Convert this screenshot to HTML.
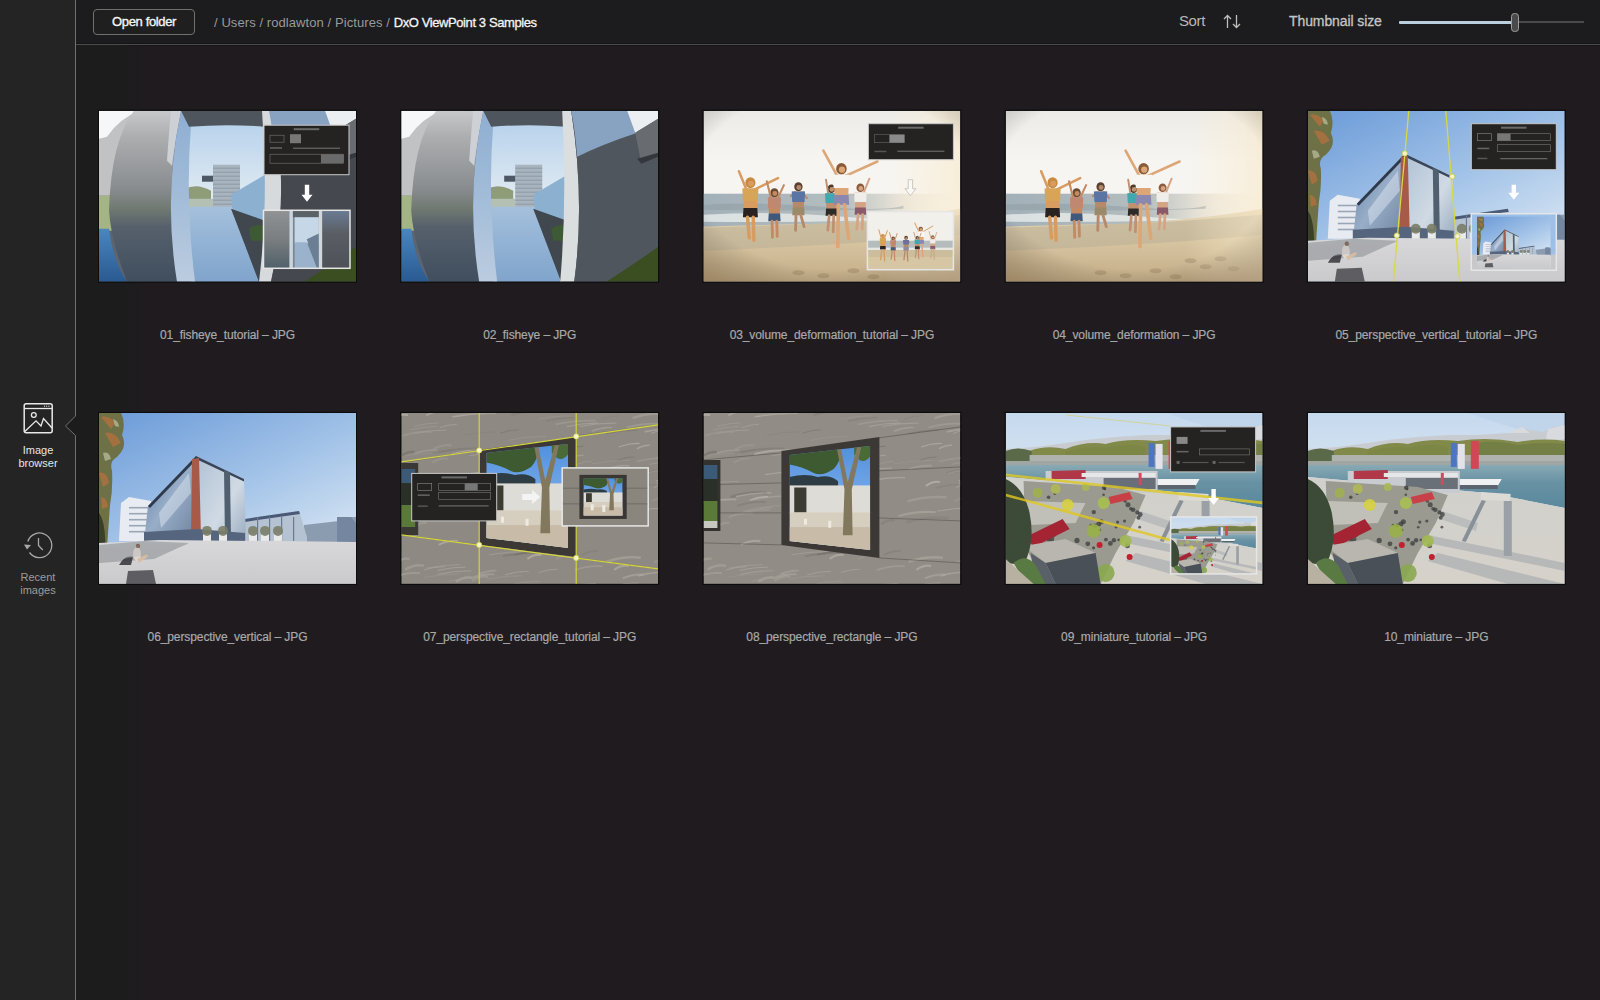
<!DOCTYPE html>
<html><head><meta charset="utf-8">
<style>
*{margin:0;padding:0;box-sizing:border-box}
html,body{width:1600px;height:1000px;overflow:hidden;background:#1f1b1f;font-family:"Liberation Sans",sans-serif}
#top{position:absolute;left:76px;top:0;width:1524px;height:44px;background:#1c1b1d}
#lstrip{position:absolute;left:76px;top:45px;width:70px;height:955px;background:linear-gradient(90deg,#1c1c1c 0,#1c1c1c 60%,rgba(31,27,31,0) 100%)}
#hline{position:absolute;left:76px;top:43px;width:1524px;height:3px;background:linear-gradient(#161516 0,#161516 33%,#4c4b4c 33%,#4c4b4c 67%,#161516 67%)}
.btn{position:absolute;left:93px;top:9px;width:102px;height:26px;border:1.5px solid #707070;border-radius:4px;background:#1f1f1f}
.t{position:absolute;white-space:nowrap;line-height:1}
.lab{position:absolute;width:302px;text-align:center;font-size:12px;line-height:14px;color:#a9a9a9;white-space:nowrap;letter-spacing:-0.1px;-webkit-text-stroke:0.2px #a9a9a9}
#g{position:absolute;left:0;top:0}
</style></head><body>
<div id="top"></div>
<div id="hline"></div>
<div id="lstrip"></div>
<div class="btn"></div>
<div class="t" style="left:112px;top:15px;font-size:13px;color:#f4f4f4;letter-spacing:-0.35px;-webkit-text-stroke:0.35px #f4f4f4">Open folder</div>
<div class="t" style="left:214px;top:16px;font-size:13px;color:#9a9a9a;letter-spacing:0.08px">/ Users / rodlawton / Pictures / <span style="color:#f4f4f4;letter-spacing:-0.4px;-webkit-text-stroke:0.3px #f4f4f4">DxO ViewPoint 3 Samples</span></div>
<div class="t" style="left:1179px;top:13px;font-size:15px;letter-spacing:-0.4px;color:#b8b8b8">Sort</div>
<svg style="position:absolute;left:1222px;top:13px" width="20" height="17" viewBox="0 0 20 17">
<path d="M5.5 2.5V15 M2 6 L5.5 2.5 L9 6" stroke="#bdbdbd" stroke-width="1.3" fill="none"/>
<path d="M14.5 2V14.5 M11 11 L14.5 14.5 L18 11" stroke="#bdbdbd" stroke-width="1.3" fill="none"/>
</svg>
<div class="t" style="left:1289px;top:14px;font-size:14px;color:#c4c4c4;letter-spacing:-0.1px;-webkit-text-stroke:0.3px #c4c4c4">Thumbnail size</div>
<div style="position:absolute;left:1399px;top:21px;width:114px;height:3px;background:#b9cfe0;border-radius:1px"></div>
<div style="position:absolute;left:1517px;top:21px;width:67px;height:2px;background:#4a4a4a"></div>
<div style="position:absolute;left:1511px;top:12.5px;width:8px;height:19.5px;background:#4a4a4a;border:1.5px solid #a0a0a0;border-radius:3.5px"></div>
<svg style="position:absolute;left:0;top:0" width="80" height="1000" viewBox="0 0 80 1000">
<rect x="60" y="400" width="20" height="50" fill="#1c1c1c"/>
<path d="M0 0 H75.5 V416 L65.5 426 L75.5 435.5 V1000 H0Z" fill="#242424"/>
<path d="M75.5 0 V416 L65.5 426 L75.5 435.5 V1000" stroke="#707070" stroke-width="1" fill="none"/>
<rect x="24.2" y="403.7" width="28" height="29" rx="2" stroke="#e8e8e8" stroke-width="1.5" fill="none"/>
<path d="M24.2 408.5 H52.2" stroke="#e8e8e8" stroke-width="1.3"/>
<circle cx="44.5" cy="406.2" r="0.6" fill="#e8e8e8"/><circle cx="46.7" cy="406.2" r="0.6" fill="#e8e8e8"/><circle cx="48.9" cy="406.2" r="0.6" fill="#e8e8e8"/>
<circle cx="33.8" cy="415" r="2.4" stroke="#e8e8e8" stroke-width="1.3" fill="none"/>
<path d="M24.8 431.5 L36 420.8 L41 426 L43.5 418.5 L52 428" stroke="#e8e8e8" stroke-width="1.3" fill="none"/>
<path d="M29.5 552.5 A12.3 12.3 0 1 0 27.8 541.5" stroke="#a8a8a8" stroke-width="1.3" fill="none"/>
<path d="M24 544.5 L31 545 L27 549.5Z" fill="#a8a8a8"/>
<path d="M38.5 538 V545.5 L42.8 550" stroke="#a8a8a8" stroke-width="1.3" fill="none"/>
</svg>
<div class="t" style="left:0;width:76px;text-align:center;top:444px;font-size:11px;line-height:13px;color:#e6e6e6">Image<br>browser</div>
<div class="t" style="left:0;width:76px;text-align:center;top:571px;font-size:11px;line-height:13px;color:#9c9c9c">Recent<br>images</div>
<svg id="g" width="1600" height="1000" viewBox="0 0 1600 1000"><defs><clipPath id="tc"><rect width="257" height="171"/></clipPath><linearGradient id="fwL" x1="0" y1="0" x2="0" y2="1"><stop offset="0" stop-color="#c4c6c8"/><stop offset="0.3" stop-color="#94979b"/><stop offset="0.6" stop-color="#687078"/><stop offset="1" stop-color="#4a5c70"/></linearGradient><linearGradient id="fpil" x1="0" y1="0" x2="1" y2="0"><stop offset="0" stop-color="#eef2f6"/><stop offset="1" stop-color="#d2dee8"/></linearGradient><linearGradient id="fsky" x1="0" y1="0" x2="0" y2="1"><stop offset="0" stop-color="#b8d2ec"/><stop offset="1" stop-color="#e6eef2"/></linearGradient><linearGradient id="fwalk" x1="0" y1="0" x2="0" y2="1"><stop offset="0" stop-color="#a4c0dc"/><stop offset="1" stop-color="#80a4cc"/></linearGradient><linearGradient id="fwR" x1="0" y1="0" x2="0" y2="1"><stop offset="0" stop-color="#70767e"/><stop offset="0.3" stop-color="#565b62"/><stop offset="1" stop-color="#4a4e54"/></linearGradient><linearGradient id="fwL2" x1="0" y1="0" x2="0" y2="1"><stop offset="0" stop-color="#c8c8ca"/><stop offset="0.15" stop-color="#acaeb0"/><stop offset="0.45" stop-color="#8a8d90"/><stop offset="0.58" stop-color="#6e7870"/><stop offset="0.68" stop-color="#56606c"/><stop offset="1" stop-color="#404e5e"/></linearGradient><linearGradient id="fpilB" x1="0" y1="0" x2="0" y2="1"><stop offset="0" stop-color="#8eaed2"/><stop offset="0.5" stop-color="#a2bcd8"/><stop offset="1" stop-color="#bccce0"/></linearGradient><linearGradient id="fwater" x1="0" y1="0" x2="0" y2="1"><stop offset="0" stop-color="#4a86c0"/><stop offset="1" stop-color="#2a5a90"/></linearGradient><linearGradient id="fiL" x1="0" y1="0" x2="0" y2="1"><stop offset="0" stop-color="#909294"/><stop offset="0.5" stop-color="#7a7e80"/><stop offset="1" stop-color="#50606a"/></linearGradient><linearGradient id="fiR" x1="0" y1="0" x2="0" y2="1"><stop offset="0" stop-color="#6a7c94"/><stop offset="0.4" stop-color="#5a5e64"/><stop offset="1" stop-color="#4e5258"/></linearGradient><linearGradient id="bsky" x1="0" y1="0" x2="0" y2="1"><stop offset="0" stop-color="#ecebe8"/><stop offset="0.3" stop-color="#f6f5f2"/><stop offset="1" stop-color="#f8f5ee"/></linearGradient><linearGradient id="bsea" x1="0" y1="0" x2="1" y2="0"><stop offset="0" stop-color="#a2b0b8"/><stop offset="0.55" stop-color="#b4bec0"/><stop offset="0.8" stop-color="#e4dccc" stop-opacity="0.6"/><stop offset="1" stop-color="#f0e4cc" stop-opacity="0"/></linearGradient><linearGradient id="bsand" x1="0" y1="0" x2="0" y2="1"><stop offset="0" stop-color="#e4d6b8"/><stop offset="0.4" stop-color="#d8c6a2"/><stop offset="1" stop-color="#c4ad88"/></linearGradient><radialGradient id="bvig" cx="0.5" cy="0.4" r="0.75"><stop offset="0" stop-color="#000" stop-opacity="0"/><stop offset="0.7" stop-color="#000" stop-opacity="0"/><stop offset="1" stop-color="#4a3418" stop-opacity="0.3"/></radialGradient><linearGradient id="bglow" x1="0" y1="0" x2="1" y2="0"><stop offset="0" stop-color="#fff4dc" stop-opacity="0"/><stop offset="0.7" stop-color="#fff0d0" stop-opacity="0"/><stop offset="1" stop-color="#f8e8c8" stop-opacity="0.6"/></linearGradient><linearGradient id="psky" x1="0" y1="0" x2="0.7" y2="1"><stop offset="0" stop-color="#6a9ad8"/><stop offset="0.55" stop-color="#a4c4e8"/><stop offset="1" stop-color="#dce8f4"/></linearGradient><linearGradient id="pglassL" x1="0" y1="0" x2="1" y2="1"><stop offset="0" stop-color="#5e7ca4"/><stop offset="0.5" stop-color="#98aec8"/><stop offset="1" stop-color="#6a809c"/></linearGradient><linearGradient id="pglassR" x1="0" y1="0" x2="1" y2="1"><stop offset="0" stop-color="#b0c2d6"/><stop offset="0.6" stop-color="#d0dae4"/><stop offset="1" stop-color="#9aacc0"/></linearGradient><linearGradient id="pplaza" x1="0" y1="0" x2="0" y2="1"><stop offset="0" stop-color="#d8d8da"/><stop offset="1" stop-color="#cacacc"/></linearGradient><linearGradient id="wsky" x1="0" y1="0" x2="0" y2="1"><stop offset="0" stop-color="#5090e0"/><stop offset="1" stop-color="#a0c4ee"/></linearGradient><linearGradient id="rsky" x1="0" y1="0" x2="0" y2="1"><stop offset="0" stop-color="#c6daee"/><stop offset="0.6" stop-color="#dfe8f0"/><stop offset="1" stop-color="#e8eef2"/></linearGradient><linearGradient id="rriver" x1="0" y1="0" x2="0" y2="1"><stop offset="0" stop-color="#88aab4"/><stop offset="0.4" stop-color="#6892a4"/><stop offset="1" stop-color="#5a889c"/></linearGradient><linearGradient id="rquay" x1="0" y1="0" x2="0" y2="1"><stop offset="0" stop-color="#d0d0cc"/><stop offset="1" stop-color="#d6d2ca"/></linearGradient></defs><g transform="translate(99,110.7)"><g clip-path="url(#tc)"><rect width="257" height="171" fill="#5c6470"/><path d="M0 0 H60 V10 Q30 20 22 85 H0Z" fill="#c0c2c4"/><path d="M0 0 H40 Q20 8 8 26 L0 28Z" fill="#f6f7f8"/><path d="M0 85 H14 V120 H0Z" fill="#a4b484"/><path d="M0 118 H10 Q14 150 28 171 H0Z" fill="url(#fwater)"/><path d="M35 0 H82 Q64 85 78 171 H28 Q12 130 10 100 Q12 30 35 0Z" fill="url(#fwL2)"/><rect x="86" y="12" width="80" height="86" fill="url(#fsky)"/><path d="M86 78 Q98 72 112 80 V98 H86Z" fill="#8e9c78"/><path d="M86 88 H114 V98 H86Z" fill="#b4c0b4"/><rect x="114" y="54" width="27" height="43" fill="#a8b4be"/><rect x="114" y="57" width="27" height="1" fill="#8e9aa6"/><rect x="114" y="61" width="27" height="1" fill="#8e9aa6"/><rect x="114" y="65" width="27" height="1" fill="#8e9aa6"/><rect x="114" y="69" width="27" height="1" fill="#8e9aa6"/><rect x="114" y="73" width="27" height="1" fill="#8e9aa6"/><rect x="114" y="77" width="27" height="1" fill="#8e9aa6"/><rect x="114" y="81" width="27" height="1" fill="#8e9aa6"/><rect x="114" y="85" width="27" height="1" fill="#8e9aa6"/><rect x="114" y="89" width="27" height="1" fill="#8e9aa6"/><rect x="114" y="93" width="27" height="1" fill="#8e9aa6"/><rect x="103" y="65" width="11" height="6" fill="#4e5864"/><path d="M132 84 L166 64 V112 L134 104Z" fill="#8cb0d0"/><path d="M86 96 H132 L160 171 H92Z" fill="url(#fwalk)"/><path d="M132 98 L166 110 V171 H160Z" fill="#40474e"/><path d="M150 118 Q158 112 166 116 V130 H152Z" fill="#3e5a34"/><path d="M72 0 H82 Q76 30 73 55 L68 50 Q70 20 72 0Z" fill="#cdd1d5"/><path d="M82 0 Q64 85 78 171 H96 Q86 90 92 14 L90 0Z" fill="url(#fpilB)"/><path d="M82 0 H168 L165 16 Q128 13 90 16Z" fill="#4e555c"/><path d="M163 0 Q170 90 160 171 H172 Q190 90 176 0Z" fill="#d6dadc"/><path d="M176 0 Q190 90 172 171 H257 V0Z" fill="#45494f"/><path d="M170 0 H230 L236 22 Q200 34 176 46 Q174 20 170 0Z" fill="#88a2c2"/><path d="M226 0 H257 V8 L234 22Z" fill="#eceff2"/><path d="M234 22 L257 8 V45 L240 52Z" fill="#686c70"/><path d="M236 48 L257 42 V46 L240 53Z" fill="#34383c"/><path d="M205 171 Q235 152 257 136 V171Z" fill="#3a4e22"/><rect x="165" y="14.5" width="85" height="49.5" fill="#252322" stroke="#c8c8c8" stroke-width="1"/><rect x="194.75" y="17.5" width="25.5" height="2" fill="#6a6a6a"/><rect x="171" y="24.5" width="14" height="7" fill="none" stroke="#777" stroke-width="0.6"/><rect x="191" y="23.5" width="11" height="9" fill="#777"/><rect x="171" y="36.5" width="12" height="1.5" fill="#666"/><rect x="194" y="37.0" width="47" height="1" fill="#777"/><rect x="171" y="43.5" width="73" height="9" fill="none" stroke="#777" stroke-width="0.6"/><rect x="221.95" y="43.5" width="22.950000000000003" height="9" fill="#6a6a6a"/><path d="M205.8 74 H210.2 V84 H213.5 L208 91 L202.5 84 H205.8Z" fill="#ffffff" stroke="none" stroke-width="0.7"/><svg x="164.5" y="99.6" width="86.5" height="58" viewBox="0 0 86.5 58" preserveAspectRatio="none" overflow="hidden"><rect width="86.5" height="58" fill="#7c8690"/><rect x="0" y="0" width="25.95" height="58" fill="url(#fiL)"/><rect x="25.95" y="0" width="3.46" height="58" fill="#c8d4de"/><rect x="29.410000000000004" y="0" width="25.95" height="6.96" fill="#5a6268"/><rect x="31.14" y="6.96" width="24.220000000000002" height="26.1" fill="#c6d8e8"/><path d="M31.14 31.900000000000002 H43.25 L53.63 58 H31.14Z" fill="#9ab2cc"/><path d="M43.25 29.0 L55.36 23.200000000000003 V58 H53.63Z" fill="#6a7e94"/><rect x="55.36" y="0" width="3.46" height="58" fill="#d0d6dc"/><rect x="58.82000000000001" y="0" width="27.68" height="58" fill="url(#fiR)"/></svg><rect x="164.5" y="99.6" width="86.5" height="58" fill="none" stroke="#e6e6e6" stroke-width="1.5"/></g><rect x="-0.5" y="-0.5" width="258" height="172" fill="none" stroke="#0c0c0c" stroke-width="1"/></g><g transform="translate(401.2,110.7)"><g clip-path="url(#tc)"><rect width="257" height="171" fill="#5c6470"/><path d="M0 0 H60 V10 Q30 20 22 85 H0Z" fill="#c0c2c4"/><path d="M0 0 H40 Q20 8 8 26 L0 28Z" fill="#f6f7f8"/><path d="M0 85 H14 V120 H0Z" fill="#a4b484"/><path d="M0 118 H10 Q14 150 28 171 H0Z" fill="url(#fwater)"/><path d="M35 0 H82 Q64 85 78 171 H28 Q12 130 10 100 Q12 30 35 0Z" fill="url(#fwL2)"/><rect x="86" y="12" width="80" height="86" fill="url(#fsky)"/><path d="M86 78 Q98 72 112 80 V98 H86Z" fill="#8e9c78"/><path d="M86 88 H114 V98 H86Z" fill="#b4c0b4"/><rect x="114" y="54" width="27" height="43" fill="#a8b4be"/><rect x="114" y="57" width="27" height="1" fill="#8e9aa6"/><rect x="114" y="61" width="27" height="1" fill="#8e9aa6"/><rect x="114" y="65" width="27" height="1" fill="#8e9aa6"/><rect x="114" y="69" width="27" height="1" fill="#8e9aa6"/><rect x="114" y="73" width="27" height="1" fill="#8e9aa6"/><rect x="114" y="77" width="27" height="1" fill="#8e9aa6"/><rect x="114" y="81" width="27" height="1" fill="#8e9aa6"/><rect x="114" y="85" width="27" height="1" fill="#8e9aa6"/><rect x="114" y="89" width="27" height="1" fill="#8e9aa6"/><rect x="114" y="93" width="27" height="1" fill="#8e9aa6"/><rect x="103" y="65" width="11" height="6" fill="#4e5864"/><path d="M132 84 L166 64 V112 L134 104Z" fill="#8cb0d0"/><path d="M86 96 H132 L160 171 H92Z" fill="url(#fwalk)"/><path d="M132 98 L166 110 V171 H160Z" fill="#40474e"/><path d="M150 118 Q158 112 166 116 V130 H152Z" fill="#3e5a34"/><path d="M72 0 H82 Q76 30 73 55 L68 50 Q70 20 72 0Z" fill="#cdd1d5"/><path d="M82 0 Q64 85 78 171 H96 Q86 90 92 14 L90 0Z" fill="url(#fpilB)"/><path d="M82 0 H168 L165 16 Q128 13 90 16Z" fill="#4e555c"/><path d="M161 0 Q166 90 159 171 H173 Q184 90 170 0Z" fill="#dadedf"/><path d="M170 0 Q184 90 173 171 H257 V0Z" fill="#50565e"/><path d="M170 0 H230 L236 22 Q200 34 176 46 Q174 20 170 0Z" fill="#88a2c2"/><path d="M226 0 H257 V8 L234 22Z" fill="#eceff2"/><path d="M234 22 L257 8 V45 L240 52Z" fill="#686c70"/><path d="M236 48 L257 42 V46 L240 53Z" fill="#34383c"/><path d="M205 171 Q235 152 257 136 V171Z" fill="#3a4e22"/></g><rect x="-0.5" y="-0.5" width="258" height="172" fill="none" stroke="#0c0c0c" stroke-width="1"/></g><g transform="translate(703.4,110.7)"><g clip-path="url(#tc)"><rect width="257" height="171" fill="url(#bsky)"/><rect x="0" y="83" width="257" height="38" fill="url(#bsea)"/><path d="M0 94 Q60 91 120 96 T200 95 V98 Q110 101 0 99Z" fill="#8e9ca2" opacity="0.5"/><path d="M0 104 Q70 100 140 106 T220 103 V108 Q120 112 0 111Z" fill="#eef0ee" opacity="0.75"/><path d="M0 116 Q60 114 120 113 Q200 108 257 98 V171 H0Z" fill="url(#bsand)"/><path d="M0 117 Q100 114 180 110 L257 104 V124 Q150 134 0 140Z" fill="#bcb098" opacity="0.6"/><ellipse cx="185" cy="150" rx="6" ry="2.5" fill="#a08a68" opacity="0.5"/><ellipse cx="200" cy="156" rx="6" ry="2.5" fill="#a08a68" opacity="0.5"/><ellipse cx="215" cy="148" rx="6" ry="2.5" fill="#a08a68" opacity="0.5"/><ellipse cx="228" cy="158" rx="6" ry="2.5" fill="#a08a68" opacity="0.5"/><ellipse cx="95" cy="162" rx="6" ry="2.5" fill="#a08a68" opacity="0.5"/><ellipse cx="120" cy="165" rx="6" ry="2.5" fill="#a08a68" opacity="0.5"/><ellipse cx="150" cy="160" rx="6" ry="2.5" fill="#a08a68" opacity="0.5"/><ellipse cx="170" cy="166" rx="6" ry="2.5" fill="#a08a68" opacity="0.5"/><ellipse cx="47" cy="72" rx="5.06" ry="5.52" fill="#c88a40"/><circle cx="47.575" cy="72.92" r="2.9899999999999998" fill="#d89c60"/><path d="M42.975 78.9 L35.5 60.5" stroke="#d89c60" stroke-width="2.53" stroke-linecap="round"/><path d="M51.025 78.9 L74.6 67.4" stroke="#d89c60" stroke-width="2.53" stroke-linecap="round"/><path d="M39.525 77.75 H54.475 L53.325 101.9 H40.675Z" fill="#d89c60"/><path d="M38.95 77.75 H55.05 L54.475 90.4 H39.525Z" fill="#d8a458"/><path d="M40.1 97.3 H53.9 L54.475 106.5 H39.525Z" fill="#2a2220"/><path d="M44.125 106.5 L45.85 127.19999999999999" stroke="#d89c60" stroke-width="3.4499999999999997" stroke-linecap="round"/><path d="M49.875 106.5 L50.45 129.5" stroke="#d89c60" stroke-width="3.4499999999999997" stroke-linecap="round"/><ellipse cx="71" cy="82" rx="4.18" ry="4.56" fill="#6a4a30"/><circle cx="71.475" cy="82.76" r="2.4699999999999998" fill="#c48a64"/><path d="M67.675 87.7 L63.4 70.6" stroke="#c48a64" stroke-width="2.09" stroke-linecap="round"/><path d="M74.325 87.7 L80.5 74.4" stroke="#c48a64" stroke-width="2.09" stroke-linecap="round"/><path d="M64.825 86.75 H77.175 L76.225 106.7 H65.775Z" fill="#c48a64"/><path d="M64.35 86.75 H77.65 L77.175 97.2 H64.825Z" fill="#c08870"/><path d="M65.3 102.9 H76.7 L77.175 110.5 H64.825Z" fill="#40587a"/><path d="M68.625 110.5 L69.1 126.65" stroke="#c48a64" stroke-width="2.8499999999999996" stroke-linecap="round"/><path d="M73.375 110.5 L73.85 125.69999999999999" stroke="#c48a64" stroke-width="2.8499999999999996" stroke-linecap="round"/><ellipse cx="95" cy="76" rx="4.18" ry="4.56" fill="#5a4030"/><circle cx="95.475" cy="76.76" r="2.4699999999999998" fill="#b48a6a"/><path d="M91.675 81.7 L87.4 85.5" stroke="#b48a6a" stroke-width="2.09" stroke-linecap="round"/><path d="M98.325 81.7 L103.55 87.4" stroke="#b48a6a" stroke-width="2.09" stroke-linecap="round"/><path d="M88.825 80.75 H101.175 L100.225 100.7 H89.775Z" fill="#b48a6a"/><path d="M88.35 80.75 H101.65 L101.175 91.2 H88.825Z" fill="#5a74a4"/><path d="M89.3 96.9 H100.7 L101.175 104.5 H88.825Z" fill="#9a8a6a"/><path d="M92.625 104.5 L92.15 119.69999999999999" stroke="#b48a6a" stroke-width="2.8499999999999996" stroke-linecap="round"/><path d="M97.375 104.5 L100.7 115.9" stroke="#b48a6a" stroke-width="2.8499999999999996" stroke-linecap="round"/><ellipse cx="128" cy="78" rx="3.9600000000000004" ry="4.32" fill="#4a3a2a"/><circle cx="128.45" cy="78.72" r="2.3400000000000003" fill="#c09070"/><path d="M124.85 83.4 L122.6 69.0" stroke="#c09070" stroke-width="1.9800000000000002" stroke-linecap="round"/><path d="M131.15 83.4 L133.4 85.2" stroke="#c09070" stroke-width="1.9800000000000002" stroke-linecap="round"/><path d="M122.15 82.5 H133.85 L132.95 101.4 H123.05Z" fill="#c09070"/><path d="M121.7 82.5 H134.3 L133.85 92.4 H122.15Z" fill="#40a8b0"/><path d="M122.6 97.8 H133.4 L133.85 105.0 H122.15Z" fill="#2e2a28"/><path d="M125.75 105.0 L124.4 119.4" stroke="#c09070" stroke-width="2.7" stroke-linecap="round"/><path d="M130.25 105.0 L129.8 121.2" stroke="#c09070" stroke-width="2.7" stroke-linecap="round"/><ellipse cx="157" cy="77" rx="3.9600000000000004" ry="4.32" fill="#8a5a3a"/><circle cx="157.45" cy="77.72" r="2.3400000000000003" fill="#d4a484"/><path d="M153.85 82.4 L150.7 84.2" stroke="#d4a484" stroke-width="1.9800000000000002" stroke-linecap="round"/><path d="M160.15 82.4 L166.0 68.0" stroke="#d4a484" stroke-width="1.9800000000000002" stroke-linecap="round"/><path d="M151.15 81.5 H162.85 L161.95 100.4 H152.05Z" fill="#d4a484"/><path d="M150.7 81.5 H163.3 L162.85 91.4 H151.15Z" fill="#f0eeea"/><path d="M151.6 96.8 H162.4 L162.85 104.0 H151.15Z" fill="#8a5a6a"/><path d="M154.75 104.0 L153.4 118.4" stroke="#d4a484" stroke-width="2.7" stroke-linecap="round"/><path d="M159.25 104.0 L158.8 118.4" stroke="#d4a484" stroke-width="2.7" stroke-linecap="round"/><ellipse cx="138" cy="58" rx="5.28" ry="5.76" fill="#8a5a38"/><circle cx="138.6" cy="58.96" r="3.12" fill="#dca676"/><path d="M133.8 65.2 L120.0 40.0" stroke="#dca676" stroke-width="2.64" stroke-linecap="round"/><path d="M142.2 65.2 L174.0 50.8" stroke="#dca676" stroke-width="2.64" stroke-linecap="round"/><path d="M130.2 64.0 H145.8 L144.6 89.2 H131.4Z" fill="#dca676"/><path d="M129.6 64.0 H146.4 L145.8 77.2 H130.2Z" fill="#f8f6f2"/><path d="M130.8 84.4 H145.2 L145.8 94.0 H130.2Z" fill="#8a88b0"/><path d="M135.0 94.0 L134.4 136.0" stroke="#dca676" stroke-width="3.5999999999999996" stroke-linecap="round"/><path d="M141.0 94.0 L145.2 127.6" stroke="#dca676" stroke-width="3.5999999999999996" stroke-linecap="round"/><rect width="257" height="171" fill="url(#bglow)"/><rect width="257" height="171" fill="url(#bvig)"/><rect x="165" y="13" width="85" height="36" fill="#252322" stroke="#c8c8c8" stroke-width="1"/><rect x="194.75" y="16" width="25.5" height="2" fill="#6a6a6a"/><rect x="171" y="24" width="30" height="8" fill="none" stroke="#666" stroke-width="0.6"/><rect x="186" y="24" width="15" height="8" fill="#8a8a8a"/><rect x="171" y="40" width="12" height="1.5" fill="#555"/><rect x="194" y="40" width="47" height="1" fill="#777"/><path d="M204.8 69 H209.2 V78 H212.5 L207 85 L201.5 78 H204.8Z" fill="#f8f8f6" stroke="#b8b4ac" stroke-width="0.7"/><svg x="164" y="101" width="86" height="58" viewBox="0 0 86 58" preserveAspectRatio="none" overflow="hidden"><rect width="86" height="58" fill="#f2f0ea"/><rect y="29.0" width="86" height="9.28" fill="#b4bcbc"/><rect y="35.96" width="86" height="2.9000000000000004" fill="#e6e8e4"/><rect y="38.28" width="86" height="19.720000000000002" fill="#d6c6a4"/><rect y="38.28" width="86" height="6.96" fill="#c4b898" opacity="0.6"/><ellipse cx="15.479999999999999" cy="24.36" rx="1.9800000000000002" ry="2.16" fill="#c88a40"/><circle cx="15.704999999999998" cy="24.72" r="1.1700000000000002" fill="#d89c60"/><path d="M13.905 27.06 L11.43 18.06" stroke="#d89c60" stroke-width="0.9900000000000001" stroke-linecap="round"/><path d="M17.055 27.06 L19.979999999999997 18.96" stroke="#d89c60" stroke-width="0.9900000000000001" stroke-linecap="round"/><path d="M12.554999999999998 26.61 H18.404999999999998 L17.955 36.06 H13.004999999999999Z" fill="#d89c60"/><path d="M12.329999999999998 26.61 H18.63 L18.404999999999998 31.56 H12.554999999999998Z" fill="#d8a458"/><path d="M12.779999999999998 34.26 H18.18 L18.404999999999998 37.86 H12.554999999999998Z" fill="#2a2220"/><path d="M14.354999999999999 37.86 L13.229999999999999 47.760000000000005" stroke="#d89c60" stroke-width="1.35" stroke-linecap="round"/><path d="M16.604999999999997 37.86 L17.279999999999998 49.11" stroke="#d89c60" stroke-width="1.35" stroke-linecap="round"/><ellipse cx="25.8" cy="26.68" rx="1.7600000000000002" ry="1.92" fill="#6a4a30"/><circle cx="26.0" cy="27.0" r="1.04" fill="#c48a64"/><path d="M24.400000000000002 29.08 L22.2 21.08" stroke="#c48a64" stroke-width="0.8800000000000001" stroke-linecap="round"/><path d="M27.2 29.08 L29.8 21.88" stroke="#c48a64" stroke-width="0.8800000000000001" stroke-linecap="round"/><path d="M23.2 28.68 H28.400000000000002 L28.0 37.08 H23.6Z" fill="#c48a64"/><path d="M23.0 28.68 H28.6 L28.400000000000002 33.08 H23.2Z" fill="#c08870"/><path d="M23.4 35.480000000000004 H28.200000000000003 L28.400000000000002 38.68 H23.2Z" fill="#40587a"/><path d="M24.8 38.68 L23.8 47.480000000000004" stroke="#c48a64" stroke-width="1.2000000000000002" stroke-linecap="round"/><path d="M26.8 38.68 L27.400000000000002 48.68" stroke="#c48a64" stroke-width="1.2000000000000002" stroke-linecap="round"/><ellipse cx="38.7" cy="26.1" rx="1.848" ry="2.016" fill="#5a4030"/><circle cx="38.910000000000004" cy="26.436" r="1.092" fill="#b48a6a"/><path d="M37.230000000000004 28.62 L35.34 30.3" stroke="#b48a6a" stroke-width="0.924" stroke-linecap="round"/><path d="M40.17 28.62 L42.480000000000004 31.14" stroke="#b48a6a" stroke-width="0.924" stroke-linecap="round"/><path d="M35.970000000000006 28.200000000000003 H41.43 L41.010000000000005 37.02 H36.39Z" fill="#b48a6a"/><path d="M35.760000000000005 28.200000000000003 H41.64 L41.43 32.82 H35.970000000000006Z" fill="#6a70a0"/><path d="M36.18 35.34 H41.220000000000006 L41.43 38.7 H35.970000000000006Z" fill="#8a8aa0"/><path d="M37.650000000000006 38.7 L36.6 47.94" stroke="#b48a6a" stroke-width="1.26" stroke-linecap="round"/><path d="M39.75 38.7 L40.38 49.2" stroke="#b48a6a" stroke-width="1.26" stroke-linecap="round"/><ellipse cx="53.32" cy="17.4" rx="2.2" ry="2.4" fill="#8a5a38"/><circle cx="53.57" cy="17.799999999999997" r="1.3" fill="#dca676"/><path d="M51.57 20.4 L47.32 11.399999999999999" stroke="#dca676" stroke-width="1.1" stroke-linecap="round"/><path d="M55.07 20.4 L65.32 14.399999999999999" stroke="#dca676" stroke-width="1.1" stroke-linecap="round"/><path d="M50.07 19.9 H56.57 L56.07 30.4 H50.57Z" fill="#dca676"/><path d="M49.82 19.9 H56.82 L56.57 25.4 H50.07Z" fill="#f8f6f2"/><path d="M50.32 28.4 H56.32 L56.57 32.4 H50.07Z" fill="#8a88b0"/><path d="M52.07 32.4 L50.82 43.4" stroke="#dca676" stroke-width="1.5" stroke-linecap="round"/><path d="M54.57 32.4 L55.32 44.9" stroke="#dca676" stroke-width="1.5" stroke-linecap="round"/><ellipse cx="49.879999999999995" cy="26.1" rx="1.6720000000000002" ry="1.8239999999999998" fill="#4a3a2a"/><circle cx="50.06999999999999" cy="26.404" r="0.9880000000000001" fill="#c09070"/><path d="M48.55 28.380000000000003 L46.459999999999994 20.78" stroke="#c09070" stroke-width="0.8360000000000001" stroke-linecap="round"/><path d="M51.209999999999994 28.380000000000003 L53.67999999999999 21.54" stroke="#c09070" stroke-width="0.8360000000000001" stroke-linecap="round"/><path d="M47.41 28.0 H52.349999999999994 L51.97 35.980000000000004 H47.78999999999999Z" fill="#c09070"/><path d="M47.22 28.0 H52.53999999999999 L52.349999999999994 32.18 H47.41Z" fill="#40a8b0"/><path d="M47.599999999999994 34.46 H52.16 L52.349999999999994 37.5 H47.41Z" fill="#2e2a28"/><path d="M48.92999999999999 37.5 L47.98 45.86" stroke="#c09070" stroke-width="1.1400000000000001" stroke-linecap="round"/><path d="M50.83 37.5 L51.4 47.0" stroke="#c09070" stroke-width="1.1400000000000001" stroke-linecap="round"/><ellipse cx="65.36" cy="25.52" rx="1.7600000000000002" ry="1.92" fill="#8a5a3a"/><circle cx="65.56" cy="25.84" r="1.04" fill="#d4a484"/><path d="M63.96 27.92 L61.76 19.919999999999998" stroke="#d4a484" stroke-width="0.8800000000000001" stroke-linecap="round"/><path d="M66.76 27.92 L69.36 20.72" stroke="#d4a484" stroke-width="0.8800000000000001" stroke-linecap="round"/><path d="M62.76 27.52 H67.96 L67.56 35.92 H63.16Z" fill="#d4a484"/><path d="M62.56 27.52 H68.16 L67.96 31.92 H62.76Z" fill="#f0eeea"/><path d="M62.96 34.32 H67.76 L67.96 37.519999999999996 H62.76Z" fill="#8a5a6a"/><path d="M64.36 37.519999999999996 L63.36 46.32" stroke="#d4a484" stroke-width="1.2000000000000002" stroke-linecap="round"/><path d="M66.36 37.519999999999996 L66.96 47.519999999999996" stroke="#d4a484" stroke-width="1.2000000000000002" stroke-linecap="round"/></svg><rect x="164" y="101" width="86" height="58" fill="none" stroke="#e6e6e6" stroke-width="1.5"/></g><rect x="-0.5" y="-0.5" width="258" height="172" fill="none" stroke="#0c0c0c" stroke-width="1"/></g><g transform="translate(1005.6,110.7)"><g clip-path="url(#tc)"><rect width="257" height="171" fill="url(#bsky)"/><rect x="0" y="83" width="257" height="38" fill="url(#bsea)"/><path d="M0 94 Q60 91 120 96 T200 95 V98 Q110 101 0 99Z" fill="#8e9ca2" opacity="0.5"/><path d="M0 104 Q70 100 140 106 T220 103 V108 Q120 112 0 111Z" fill="#eef0ee" opacity="0.75"/><path d="M0 116 Q60 114 120 113 Q200 108 257 98 V171 H0Z" fill="url(#bsand)"/><path d="M0 117 Q100 114 180 110 L257 104 V124 Q150 134 0 140Z" fill="#bcb098" opacity="0.6"/><ellipse cx="185" cy="150" rx="6" ry="2.5" fill="#a08a68" opacity="0.5"/><ellipse cx="200" cy="156" rx="6" ry="2.5" fill="#a08a68" opacity="0.5"/><ellipse cx="215" cy="148" rx="6" ry="2.5" fill="#a08a68" opacity="0.5"/><ellipse cx="228" cy="158" rx="6" ry="2.5" fill="#a08a68" opacity="0.5"/><ellipse cx="95" cy="162" rx="6" ry="2.5" fill="#a08a68" opacity="0.5"/><ellipse cx="120" cy="165" rx="6" ry="2.5" fill="#a08a68" opacity="0.5"/><ellipse cx="150" cy="160" rx="6" ry="2.5" fill="#a08a68" opacity="0.5"/><ellipse cx="170" cy="166" rx="6" ry="2.5" fill="#a08a68" opacity="0.5"/><ellipse cx="47" cy="72" rx="5.06" ry="5.52" fill="#c88a40"/><circle cx="47.575" cy="72.92" r="2.9899999999999998" fill="#d89c60"/><path d="M42.975 78.9 L35.5 60.5" stroke="#d89c60" stroke-width="2.53" stroke-linecap="round"/><path d="M51.025 78.9 L74.6 67.4" stroke="#d89c60" stroke-width="2.53" stroke-linecap="round"/><path d="M39.525 77.75 H54.475 L53.325 101.9 H40.675Z" fill="#d89c60"/><path d="M38.95 77.75 H55.05 L54.475 90.4 H39.525Z" fill="#d8a458"/><path d="M40.1 97.3 H53.9 L54.475 106.5 H39.525Z" fill="#2a2220"/><path d="M44.125 106.5 L45.85 127.19999999999999" stroke="#d89c60" stroke-width="3.4499999999999997" stroke-linecap="round"/><path d="M49.875 106.5 L50.45 129.5" stroke="#d89c60" stroke-width="3.4499999999999997" stroke-linecap="round"/><ellipse cx="71" cy="82" rx="4.18" ry="4.56" fill="#6a4a30"/><circle cx="71.475" cy="82.76" r="2.4699999999999998" fill="#c48a64"/><path d="M67.675 87.7 L63.4 70.6" stroke="#c48a64" stroke-width="2.09" stroke-linecap="round"/><path d="M74.325 87.7 L80.5 74.4" stroke="#c48a64" stroke-width="2.09" stroke-linecap="round"/><path d="M64.825 86.75 H77.175 L76.225 106.7 H65.775Z" fill="#c48a64"/><path d="M64.35 86.75 H77.65 L77.175 97.2 H64.825Z" fill="#c08870"/><path d="M65.3 102.9 H76.7 L77.175 110.5 H64.825Z" fill="#40587a"/><path d="M68.625 110.5 L69.1 126.65" stroke="#c48a64" stroke-width="2.8499999999999996" stroke-linecap="round"/><path d="M73.375 110.5 L73.85 125.69999999999999" stroke="#c48a64" stroke-width="2.8499999999999996" stroke-linecap="round"/><ellipse cx="95" cy="76" rx="4.18" ry="4.56" fill="#5a4030"/><circle cx="95.475" cy="76.76" r="2.4699999999999998" fill="#b48a6a"/><path d="M91.675 81.7 L87.4 85.5" stroke="#b48a6a" stroke-width="2.09" stroke-linecap="round"/><path d="M98.325 81.7 L103.55 87.4" stroke="#b48a6a" stroke-width="2.09" stroke-linecap="round"/><path d="M88.825 80.75 H101.175 L100.225 100.7 H89.775Z" fill="#b48a6a"/><path d="M88.35 80.75 H101.65 L101.175 91.2 H88.825Z" fill="#5a74a4"/><path d="M89.3 96.9 H100.7 L101.175 104.5 H88.825Z" fill="#9a8a6a"/><path d="M92.625 104.5 L92.15 119.69999999999999" stroke="#b48a6a" stroke-width="2.8499999999999996" stroke-linecap="round"/><path d="M97.375 104.5 L100.7 115.9" stroke="#b48a6a" stroke-width="2.8499999999999996" stroke-linecap="round"/><ellipse cx="128" cy="78" rx="3.9600000000000004" ry="4.32" fill="#4a3a2a"/><circle cx="128.45" cy="78.72" r="2.3400000000000003" fill="#c09070"/><path d="M124.85 83.4 L122.6 69.0" stroke="#c09070" stroke-width="1.9800000000000002" stroke-linecap="round"/><path d="M131.15 83.4 L133.4 85.2" stroke="#c09070" stroke-width="1.9800000000000002" stroke-linecap="round"/><path d="M122.15 82.5 H133.85 L132.95 101.4 H123.05Z" fill="#c09070"/><path d="M121.7 82.5 H134.3 L133.85 92.4 H122.15Z" fill="#40a8b0"/><path d="M122.6 97.8 H133.4 L133.85 105.0 H122.15Z" fill="#2e2a28"/><path d="M125.75 105.0 L124.4 119.4" stroke="#c09070" stroke-width="2.7" stroke-linecap="round"/><path d="M130.25 105.0 L129.8 121.2" stroke="#c09070" stroke-width="2.7" stroke-linecap="round"/><ellipse cx="157" cy="77" rx="3.9600000000000004" ry="4.32" fill="#8a5a3a"/><circle cx="157.45" cy="77.72" r="2.3400000000000003" fill="#d4a484"/><path d="M153.85 82.4 L150.7 84.2" stroke="#d4a484" stroke-width="1.9800000000000002" stroke-linecap="round"/><path d="M160.15 82.4 L166.0 68.0" stroke="#d4a484" stroke-width="1.9800000000000002" stroke-linecap="round"/><path d="M151.15 81.5 H162.85 L161.95 100.4 H152.05Z" fill="#d4a484"/><path d="M150.7 81.5 H163.3 L162.85 91.4 H151.15Z" fill="#f0eeea"/><path d="M151.6 96.8 H162.4 L162.85 104.0 H151.15Z" fill="#8a5a6a"/><path d="M154.75 104.0 L153.4 118.4" stroke="#d4a484" stroke-width="2.7" stroke-linecap="round"/><path d="M159.25 104.0 L158.8 118.4" stroke="#d4a484" stroke-width="2.7" stroke-linecap="round"/><ellipse cx="138" cy="58" rx="5.28" ry="5.76" fill="#8a5a38"/><circle cx="138.6" cy="58.96" r="3.12" fill="#dca676"/><path d="M133.8 65.2 L120.0 40.0" stroke="#dca676" stroke-width="2.64" stroke-linecap="round"/><path d="M142.2 65.2 L174.0 50.8" stroke="#dca676" stroke-width="2.64" stroke-linecap="round"/><path d="M130.2 64.0 H145.8 L144.6 89.2 H131.4Z" fill="#dca676"/><path d="M129.6 64.0 H146.4 L145.8 77.2 H130.2Z" fill="#f8f6f2"/><path d="M130.8 84.4 H145.2 L145.8 94.0 H130.2Z" fill="#8a88b0"/><path d="M135.0 94.0 L134.4 136.0" stroke="#dca676" stroke-width="3.5999999999999996" stroke-linecap="round"/><path d="M141.0 94.0 L145.2 127.6" stroke="#dca676" stroke-width="3.5999999999999996" stroke-linecap="round"/><rect width="257" height="171" fill="url(#bglow)"/><rect width="257" height="171" fill="url(#bvig)"/></g><rect x="-0.5" y="-0.5" width="258" height="172" fill="none" stroke="#0c0c0c" stroke-width="1"/></g><g transform="translate(1307.8,110.7)"><g clip-path="url(#tc)"><rect width="257" height="171" fill="url(#psky)"/><path d="M205 112 L240 108 L242 104 L257 104 V132 H205Z" fill="#8c9cb0"/><path d="M238 104 L252 104 L257 110 V132 H238Z" fill="#7486a0"/><path d="M146 106 L200 98 L208 124 V132 H146Z" fill="#b4c2d2"/><path d="M146 106 L200 98 L201 101 L146 109Z" fill="#4a5a76"/><rect x="158" y="104" width="1.2" height="24" fill="#6a7a90"/><rect x="170" y="104" width="1.2" height="24" fill="#6a7a90"/><rect x="182" y="104" width="1.2" height="24" fill="#6a7a90"/><rect x="194" y="104" width="1.2" height="24" fill="#6a7a90"/><path d="M22 90 L30 84 L52 88 V128 H20Z" fill="#e8ecf2"/><rect x="30" y="94" width="20" height="1.6" fill="#9aa6b6"/><rect x="30" y="100" width="20" height="1.6" fill="#9aa6b6"/><rect x="30" y="106" width="20" height="1.6" fill="#9aa6b6"/><rect x="30" y="112" width="20" height="1.6" fill="#9aa6b6"/><rect x="30" y="118" width="20" height="1.6" fill="#9aa6b6"/><path d="M49 93 L97 43 L98 126 L45 129Z" fill="url(#pglassL)"/><path d="M97 43 L145 66 L147 127 L98 126Z" fill="url(#pglassR)"/><path d="M60 100 L90 60 L92 80 L62 115Z" fill="#dce6f0" opacity="0.5"/><path d="M49 93 L97 43 L99 45 L51 95Z" fill="#2e3a4c"/><path d="M97 43 L145 66 L145 68.5 L97 46Z" fill="#3a4658"/><path d="M93 46 L100 45 L102 125 L92 126Z" fill="#a85a48"/><path d="M125 57 L131 60 L132 126 L126 126Z" fill="#506070"/><path d="M45 119 L98 116 L146 120 V130 H45Z" fill="#56657e"/><path d="M0 0 H22 Q27 10 23 22 Q29 34 18 44 Q10 48 13 58 Q14 76 11 92 Q9 120 7 150 H0Z" fill="#6e7046"/><path d="M2 4 Q10 2 16 10 L12 16Z M6 20 Q16 18 22 30 L14 34Z M0 60 Q8 58 10 70 L4 74Z M2 84 Q8 84 9 94 L3 96Z" fill="#b0703e" opacity="0.8"/><path d="M14 6 Q20 8 20 14 L16 13Z M4 40 Q10 38 12 46 L6 48Z" fill="#c8d0b0" opacity="0.6"/><path d="M0 100 Q8 110 6 150 H0Z" fill="#3a4028"/><path d="M0 130 L60 127 L257 129 V171 H0Z" fill="url(#pplaza)"/><path d="M0 132 L45 128 L90 130 L55 146 L0 150Z" fill="#8e9296" opacity="0.6"/><path d="M29 158 L54 157 L57 171 H27Z" fill="#5e5e62"/><rect x="104" y="121" width="8" height="7" fill="#eaeaea"/><circle cx="108" cy="118" r="5" fill="#7a7e68" opacity="0.9"/><rect x="120" y="121" width="8" height="7" fill="#eaeaea"/><circle cx="124" cy="118" r="5" fill="#7a7e68" opacity="0.9"/><rect x="150" y="121" width="8" height="7" fill="#eaeaea"/><circle cx="154" cy="118" r="5" fill="#7a7e68" opacity="0.9"/><rect x="162" y="121" width="8" height="7" fill="#eaeaea"/><circle cx="166" cy="118" r="5" fill="#7a7e68" opacity="0.9"/><rect x="175" y="121" width="8" height="7" fill="#eaeaea"/><circle cx="179" cy="118" r="5" fill="#7a7e68" opacity="0.9"/><path d="M20 152 Q26 142 34 144 L32 152Z" fill="#34343a" opacity="0.85"/><ellipse cx="38" cy="141" rx="4" ry="7" fill="#e4dcd4" opacity="0.9"/><circle cx="39" cy="133" r="2.2" fill="#6a4a34"/><path d="M38 146 L48 141 L49 143.5 L40 150Z" fill="#d8bca4" opacity="0.9"/><path d="M0 150 L60 140 L90 131 L40 131 L0 136Z" fill="#a8aaae" opacity="0.35"/><path d="M101 0 L85.5 171" stroke="#d8d840" stroke-width="1.3"/><path d="M138 0 L152 171" stroke="#d8d840" stroke-width="1.3"/><circle cx="97" cy="42.7" r="2.6" fill="#f4f4c8" stroke="#c8c840" stroke-width="0.8"/><circle cx="144.4" cy="65.8" r="2.6" fill="#f4f4c8" stroke="#c8c840" stroke-width="0.8"/><circle cx="89" cy="124.8" r="2.6" fill="#f4f4c8" stroke="#c8c840" stroke-width="0.8"/><circle cx="149.6" cy="125.6" r="2.6" fill="#f4f4c8" stroke="#c8c840" stroke-width="0.8"/><rect x="163.5" y="13" width="85" height="46" fill="#252322" stroke="#c8c8c8" stroke-width="1"/><rect x="193.25" y="16" width="25.5" height="2" fill="#6a6a6a"/><rect x="169.5" y="23" width="14" height="7" fill="none" stroke="#888" stroke-width="0.6"/><rect x="189.5" y="23" width="53" height="7" fill="none" stroke="#777" stroke-width="0.6"/><rect x="189.5" y="23" width="13.25" height="7" fill="#777"/><rect x="169.5" y="37" width="12" height="1.5" fill="#666"/><rect x="189.5" y="34" width="53" height="7" fill="none" stroke="#777" stroke-width="0.6"/><rect x="169.5" y="47" width="10" height="1.5" fill="#555"/><rect x="192.5" y="47.5" width="47" height="1" fill="#777"/><path d="M203.8 74 H208.2 V82 H211.5 L206 89 L200.5 82 H203.8Z" fill="#ffffff" stroke="none" stroke-width="0.7"/><svg x="163.5" y="103" width="85" height="56.5" viewBox="-20 -10 297 191" preserveAspectRatio="none" overflow="hidden"><rect x="-30" y="-20" width="320" height="220" fill="#9cc0e8"/><rect x="-30" y="128" width="320" height="80" fill="#c8c8ca"/><rect width="257" height="171" fill="url(#psky)"/><path d="M205 112 L240 108 L242 104 L257 104 V132 H205Z" fill="#8c9cb0"/><path d="M238 104 L252 104 L257 110 V132 H238Z" fill="#7486a0"/><path d="M146 106 L200 98 L208 124 V132 H146Z" fill="#b4c2d2"/><path d="M146 106 L200 98 L201 101 L146 109Z" fill="#4a5a76"/><rect x="158" y="104" width="1.2" height="24" fill="#6a7a90"/><rect x="170" y="104" width="1.2" height="24" fill="#6a7a90"/><rect x="182" y="104" width="1.2" height="24" fill="#6a7a90"/><rect x="194" y="104" width="1.2" height="24" fill="#6a7a90"/><path d="M22 90 L30 84 L52 88 V128 H20Z" fill="#e8ecf2"/><rect x="30" y="94" width="20" height="1.6" fill="#9aa6b6"/><rect x="30" y="100" width="20" height="1.6" fill="#9aa6b6"/><rect x="30" y="106" width="20" height="1.6" fill="#9aa6b6"/><rect x="30" y="112" width="20" height="1.6" fill="#9aa6b6"/><rect x="30" y="118" width="20" height="1.6" fill="#9aa6b6"/><path d="M49 93 L97 43 L98 126 L45 129Z" fill="url(#pglassL)"/><path d="M97 43 L145 66 L147 127 L98 126Z" fill="url(#pglassR)"/><path d="M60 100 L90 60 L92 80 L62 115Z" fill="#dce6f0" opacity="0.5"/><path d="M49 93 L97 43 L99 45 L51 95Z" fill="#2e3a4c"/><path d="M97 43 L145 66 L145 68.5 L97 46Z" fill="#3a4658"/><path d="M93 46 L100 45 L102 125 L92 126Z" fill="#a85a48"/><path d="M125 57 L131 60 L132 126 L126 126Z" fill="#506070"/><path d="M45 119 L98 116 L146 120 V130 H45Z" fill="#56657e"/><path d="M0 0 H22 Q27 10 23 22 Q29 34 18 44 Q10 48 13 58 Q14 76 11 92 Q9 120 7 150 H0Z" fill="#6e7046"/><path d="M2 4 Q10 2 16 10 L12 16Z M6 20 Q16 18 22 30 L14 34Z M0 60 Q8 58 10 70 L4 74Z M2 84 Q8 84 9 94 L3 96Z" fill="#b0703e" opacity="0.8"/><path d="M14 6 Q20 8 20 14 L16 13Z M4 40 Q10 38 12 46 L6 48Z" fill="#c8d0b0" opacity="0.6"/><path d="M0 100 Q8 110 6 150 H0Z" fill="#3a4028"/><path d="M0 130 L60 127 L257 129 V171 H0Z" fill="url(#pplaza)"/><path d="M0 132 L45 128 L90 130 L55 146 L0 150Z" fill="#8e9296" opacity="0.6"/><path d="M29 158 L54 157 L57 171 H27Z" fill="#5e5e62"/><rect x="104" y="121" width="8" height="7" fill="#eaeaea"/><circle cx="108" cy="118" r="5" fill="#7a7e68" opacity="0.9"/><rect x="120" y="121" width="8" height="7" fill="#eaeaea"/><circle cx="124" cy="118" r="5" fill="#7a7e68" opacity="0.9"/><rect x="150" y="121" width="8" height="7" fill="#eaeaea"/><circle cx="154" cy="118" r="5" fill="#7a7e68" opacity="0.9"/><rect x="162" y="121" width="8" height="7" fill="#eaeaea"/><circle cx="166" cy="118" r="5" fill="#7a7e68" opacity="0.9"/><rect x="175" y="121" width="8" height="7" fill="#eaeaea"/><circle cx="179" cy="118" r="5" fill="#7a7e68" opacity="0.9"/><path d="M20 152 Q26 142 34 144 L32 152Z" fill="#34343a" opacity="0.85"/><ellipse cx="38" cy="141" rx="4" ry="7" fill="#e4dcd4" opacity="0.9"/><circle cx="39" cy="133" r="2.2" fill="#6a4a34"/><path d="M38 146 L48 141 L49 143.5 L40 150Z" fill="#d8bca4" opacity="0.9"/><path d="M0 150 L60 140 L90 131 L40 131 L0 136Z" fill="#a8aaae" opacity="0.35"/></svg><rect x="163.5" y="103" width="85" height="56.5" fill="none" stroke="#e6e6e6" stroke-width="1.5"/></g><rect x="-0.5" y="-0.5" width="258" height="172" fill="none" stroke="#0c0c0c" stroke-width="1"/></g><g transform="translate(99,412.9)"><g clip-path="url(#tc)"><rect width="257" height="171" fill="url(#psky)"/><path d="M205 112 L240 108 L242 104 L257 104 V132 H205Z" fill="#8c9cb0"/><path d="M238 104 L252 104 L257 110 V132 H238Z" fill="#7486a0"/><path d="M146 106 L200 98 L208 124 V132 H146Z" fill="#b4c2d2"/><path d="M146 106 L200 98 L201 101 L146 109Z" fill="#4a5a76"/><rect x="158" y="104" width="1.2" height="24" fill="#6a7a90"/><rect x="170" y="104" width="1.2" height="24" fill="#6a7a90"/><rect x="182" y="104" width="1.2" height="24" fill="#6a7a90"/><rect x="194" y="104" width="1.2" height="24" fill="#6a7a90"/><path d="M22 90 L30 84 L52 88 V128 H20Z" fill="#e8ecf2"/><rect x="30" y="94" width="20" height="1.6" fill="#9aa6b6"/><rect x="30" y="100" width="20" height="1.6" fill="#9aa6b6"/><rect x="30" y="106" width="20" height="1.6" fill="#9aa6b6"/><rect x="30" y="112" width="20" height="1.6" fill="#9aa6b6"/><rect x="30" y="118" width="20" height="1.6" fill="#9aa6b6"/><path d="M49 93 L97 43 L98 126 L45 129Z" fill="url(#pglassL)"/><path d="M97 43 L145 66 L147 127 L98 126Z" fill="url(#pglassR)"/><path d="M60 100 L90 60 L92 80 L62 115Z" fill="#dce6f0" opacity="0.5"/><path d="M49 93 L97 43 L99 45 L51 95Z" fill="#2e3a4c"/><path d="M97 43 L145 66 L145 68.5 L97 46Z" fill="#3a4658"/><path d="M93 46 L100 45 L102 125 L92 126Z" fill="#a85a48"/><path d="M125 57 L131 60 L132 126 L126 126Z" fill="#506070"/><path d="M45 119 L98 116 L146 120 V130 H45Z" fill="#56657e"/><path d="M0 0 H22 Q27 10 23 22 Q29 34 18 44 Q10 48 13 58 Q14 76 11 92 Q9 120 7 150 H0Z" fill="#6e7046"/><path d="M2 4 Q10 2 16 10 L12 16Z M6 20 Q16 18 22 30 L14 34Z M0 60 Q8 58 10 70 L4 74Z M2 84 Q8 84 9 94 L3 96Z" fill="#b0703e" opacity="0.8"/><path d="M14 6 Q20 8 20 14 L16 13Z M4 40 Q10 38 12 46 L6 48Z" fill="#c8d0b0" opacity="0.6"/><path d="M0 100 Q8 110 6 150 H0Z" fill="#3a4028"/><path d="M0 130 L60 127 L257 129 V171 H0Z" fill="url(#pplaza)"/><path d="M0 132 L45 128 L90 130 L55 146 L0 150Z" fill="#8e9296" opacity="0.6"/><path d="M29 158 L54 157 L57 171 H27Z" fill="#5e5e62"/><rect x="104" y="121" width="8" height="7" fill="#eaeaea"/><circle cx="108" cy="118" r="5" fill="#7a7e68" opacity="0.9"/><rect x="120" y="121" width="8" height="7" fill="#eaeaea"/><circle cx="124" cy="118" r="5" fill="#7a7e68" opacity="0.9"/><rect x="150" y="121" width="8" height="7" fill="#eaeaea"/><circle cx="154" cy="118" r="5" fill="#7a7e68" opacity="0.9"/><rect x="162" y="121" width="8" height="7" fill="#eaeaea"/><circle cx="166" cy="118" r="5" fill="#7a7e68" opacity="0.9"/><rect x="175" y="121" width="8" height="7" fill="#eaeaea"/><circle cx="179" cy="118" r="5" fill="#7a7e68" opacity="0.9"/><path d="M20 152 Q26 142 34 144 L32 152Z" fill="#34343a" opacity="0.85"/><ellipse cx="38" cy="141" rx="4" ry="7" fill="#e4dcd4" opacity="0.9"/><circle cx="39" cy="133" r="2.2" fill="#6a4a34"/><path d="M38 146 L48 141 L49 143.5 L40 150Z" fill="#d8bca4" opacity="0.9"/><path d="M0 150 L60 140 L90 131 L40 131 L0 136Z" fill="#a8aaae" opacity="0.35"/></g><rect x="-0.5" y="-0.5" width="258" height="172" fill="none" stroke="#0c0c0c" stroke-width="1"/></g><g transform="translate(401.2,412.9)"><g clip-path="url(#tc)"><rect width="257" height="171" fill="#8e8982"/><path d="M62.9 22.3 q16.7 -3.4 33.5 -3.4" stroke="#827e78" stroke-width="0.9" opacity="0.39" fill="none"/><path d="M137.3 159.7 q9.5 -3.4 19.1 -3.4" stroke="#bdb8b0" stroke-width="1.0" opacity="0.38" fill="none"/><path d="M-4.0 71.8 q19.6 -3.5 39.3 -3.4" stroke="#aaa59e" stroke-width="1.0" opacity="0.60" fill="none"/><path d="M137.3 6.2 q15.7 -3.3 31.3 -3.4" stroke="#aaa59e" stroke-width="0.9" opacity="0.37" fill="none"/><path d="M216.4 47.4 q8.4 -3.5 16.8 -3.4" stroke="#76726c" stroke-width="1.0" opacity="0.57" fill="none"/><path d="M165.7 13.7 q15.4 -3.7 30.8 -3.5" stroke="#b4afa8" stroke-width="1.1" opacity="0.57" fill="none"/><path d="M-12.0 5.8 q9.4 -5.0 18.8 -3.8" stroke="#bdb8b0" stroke-width="2.0" opacity="0.66" fill="none"/><path d="M103.6 162.1 q12.0 -3.9 23.9 -3.5" stroke="#aaa59e" stroke-width="1.2" opacity="0.63" fill="none"/><path d="M40.1 99.0 q14.7 -5.6 29.3 -4.0" stroke="#9e9992" stroke-width="2.4" opacity="0.53" fill="none"/><path d="M144.8 8.2 q14.4 -3.6 28.9 -3.4" stroke="#76726c" stroke-width="1.1" opacity="0.41" fill="none"/><path d="M110.3 2.1 q17.0 -5.3 34.1 -3.9" stroke="#827e78" stroke-width="2.2" opacity="0.67" fill="none"/><path d="M204.9 56.6 q11.8 -4.5 23.6 -3.7" stroke="#bdb8b0" stroke-width="1.7" opacity="0.38" fill="none"/><path d="M-3.1 43.9 q17.5 -3.4 35.0 -3.4" stroke="#9e9992" stroke-width="0.9" opacity="0.63" fill="none"/><path d="M155.7 174.8 q19.6 -4.0 39.1 -3.5" stroke="#bdb8b0" stroke-width="1.3" opacity="0.70" fill="none"/><path d="M69.6 165.3 q11.9 -4.8 23.7 -3.8" stroke="#bdb8b0" stroke-width="1.9" opacity="0.37" fill="none"/><path d="M190.5 18.4 q10.1 -4.3 20.2 -3.6" stroke="#bdb8b0" stroke-width="1.5" opacity="0.38" fill="none"/><path d="M98.9 94.4 q20.6 -5.4 41.2 -3.9" stroke="#827e78" stroke-width="2.3" opacity="0.46" fill="none"/><path d="M89.2 59.9 q20.6 -5.8 41.2 -4.0" stroke="#aaa59e" stroke-width="2.5" opacity="0.38" fill="none"/><path d="M13.4 114.2 q6.2 -5.4 12.4 -3.9" stroke="#aaa59e" stroke-width="2.3" opacity="0.46" fill="none"/><path d="M-28.8 70.8 q12.1 -4.7 24.2 -3.7" stroke="#aaa59e" stroke-width="1.8" opacity="0.63" fill="none"/><path d="M117.9 106.8 q17.2 -3.3 34.3 -3.4" stroke="#9e9992" stroke-width="0.9" opacity="0.67" fill="none"/><path d="M82.6 67.2 q7.7 -4.9 15.4 -3.8" stroke="#b4afa8" stroke-width="1.9" opacity="0.43" fill="none"/><path d="M252.6 74.8 q7.8 -4.8 15.6 -3.8" stroke="#b4afa8" stroke-width="1.9" opacity="0.35" fill="none"/><path d="M13.4 13.4 q12.0 -3.3 24.0 -3.3" stroke="#aaa59e" stroke-width="0.8" opacity="0.60" fill="none"/><path d="M12.6 40.7 q11.7 -4.2 23.5 -3.6" stroke="#b4afa8" stroke-width="1.5" opacity="0.40" fill="none"/><path d="M110.1 172.0 q13.9 -4.0 27.9 -3.5" stroke="#aaa59e" stroke-width="1.4" opacity="0.39" fill="none"/><path d="M68.3 42.9 q19.7 -3.6 39.4 -3.4" stroke="#b4afa8" stroke-width="1.1" opacity="0.43" fill="none"/><path d="M243.2 60.5 q17.4 -5.7 34.8 -4.0" stroke="#827e78" stroke-width="2.4" opacity="0.47" fill="none"/><path d="M154.5 11.5 q19.9 -4.6 39.9 -3.7" stroke="#aaa59e" stroke-width="1.7" opacity="0.49" fill="none"/><path d="M33.9 93.0 q14.3 -4.9 28.6 -3.8" stroke="#827e78" stroke-width="1.9" opacity="0.67" fill="none"/><path d="M252.7 149.3 q19.3 -5.4 38.6 -3.9" stroke="#9e9992" stroke-width="2.3" opacity="0.67" fill="none"/><path d="M27.4 84.2 q18.1 -5.9 36.1 -4.0" stroke="#76726c" stroke-width="2.6" opacity="0.54" fill="none"/><path d="M25.6 104.5 q11.7 -5.4 23.4 -3.9" stroke="#9e9992" stroke-width="2.3" opacity="0.75" fill="none"/><path d="M244.1 61.0 q9.6 -3.8 19.3 -3.5" stroke="#aaa59e" stroke-width="1.2" opacity="0.49" fill="none"/><path d="M108.5 173.3 q16.1 -3.2 32.1 -3.3" stroke="#9e9992" stroke-width="0.8" opacity="0.49" fill="none"/><path d="M154.6 146.1 q8.0 -4.2 16.0 -3.6" stroke="#9e9992" stroke-width="1.5" opacity="0.65" fill="none"/><path d="M107.2 27.3 q19.0 -4.1 38.0 -3.6" stroke="#9e9992" stroke-width="1.4" opacity="0.51" fill="none"/><path d="M85.2 166.4 q18.0 -3.7 35.9 -3.4" stroke="#aaa59e" stroke-width="1.1" opacity="0.36" fill="none"/><path d="M139.6 79.2 q16.8 -4.9 33.6 -3.8" stroke="#827e78" stroke-width="1.9" opacity="0.74" fill="none"/><path d="M158.6 58.4 q15.1 -3.6 30.1 -3.4" stroke="#b4afa8" stroke-width="1.0" opacity="0.67" fill="none"/><path d="M178.5 13.6 q18.4 -3.6 36.7 -3.4" stroke="#aaa59e" stroke-width="1.1" opacity="0.68" fill="none"/><path d="M30.6 40.6 q10.8 -3.8 21.7 -3.5" stroke="#827e78" stroke-width="1.2" opacity="0.48" fill="none"/><path d="M126.2 146.0 q7.0 -5.2 14.0 -3.9" stroke="#bdb8b0" stroke-width="2.1" opacity="0.61" fill="none"/><path d="M203.9 88.5 q19.6 -5.6 39.3 -4.0" stroke="#aaa59e" stroke-width="2.4" opacity="0.56" fill="none"/><path d="M120.2 -1.6 q13.3 -3.7 26.5 -3.5" stroke="#b4afa8" stroke-width="1.1" opacity="0.66" fill="none"/><path d="M13.0 20.6 q16.2 -3.5 32.4 -3.4" stroke="#b4afa8" stroke-width="1.0" opacity="0.48" fill="none"/><path d="M118.8 95.5 q18.9 -3.5 37.9 -3.4" stroke="#827e78" stroke-width="1.0" opacity="0.37" fill="none"/><path d="M24.9 2.6 q7.6 -4.4 15.2 -3.6" stroke="#b4afa8" stroke-width="1.6" opacity="0.65" fill="none"/><path d="M231.9 75.2 q16.1 -4.6 32.2 -3.7" stroke="#827e78" stroke-width="1.7" opacity="0.43" fill="none"/><path d="M49.6 87.0 q19.3 -4.6 38.6 -3.7" stroke="#aaa59e" stroke-width="1.7" opacity="0.63" fill="none"/><path d="M221.6 165.5 q10.3 -4.7 20.6 -3.7" stroke="#aaa59e" stroke-width="1.8" opacity="0.69" fill="none"/><path d="M9.4 17.0 q13.3 -3.4 26.6 -3.4" stroke="#aaa59e" stroke-width="0.9" opacity="0.52" fill="none"/><path d="M31.0 49.8 q8.0 -5.3 16.0 -3.9" stroke="#9e9992" stroke-width="2.2" opacity="0.61" fill="none"/><path d="M75.1 40.8 q8.3 -4.5 16.5 -3.7" stroke="#9e9992" stroke-width="1.6" opacity="0.73" fill="none"/><path d="M84.3 83.2 q22.3 -5.4 44.7 -3.9" stroke="#aaa59e" stroke-width="2.3" opacity="0.63" fill="none"/><path d="M255.3 68.1 q13.0 -4.2 25.9 -3.6" stroke="#b4afa8" stroke-width="1.4" opacity="0.64" fill="none"/><path d="M-24.4 95.3 q13.3 -3.2 26.5 -3.3" stroke="#76726c" stroke-width="0.8" opacity="0.56" fill="none"/><path d="M54.8 168.9 q7.9 -5.7 15.7 -4.0" stroke="#aaa59e" stroke-width="2.5" opacity="0.74" fill="none"/><path d="M0.1 43.1 q6.7 -5.3 13.3 -3.9" stroke="#76726c" stroke-width="2.2" opacity="0.65" fill="none"/><path d="M205.3 148.8 q17.2 -5.8 34.3 -4.0" stroke="#bdb8b0" stroke-width="2.5" opacity="0.41" fill="none"/><path d="M233.8 98.3 q17.6 -3.4 35.1 -3.4" stroke="#b4afa8" stroke-width="1.0" opacity="0.67" fill="none"/><path d="M22.6 157.0 q10.4 -3.2 20.9 -3.3" stroke="#b4afa8" stroke-width="0.8" opacity="0.67" fill="none"/><path d="M-6.0 150.0 q7.1 -5.5 14.2 -3.9" stroke="#bdb8b0" stroke-width="2.4" opacity="0.35" fill="none"/><path d="M255.4 70.6 q21.1 -4.9 42.2 -3.8" stroke="#b4afa8" stroke-width="1.9" opacity="0.56" fill="none"/><path d="M38.4 14.8 q8.7 -3.3 17.3 -3.4" stroke="#aaa59e" stroke-width="0.9" opacity="0.72" fill="none"/><path d="M150.4 91.1 q9.4 -4.4 18.8 -3.6" stroke="#9e9992" stroke-width="1.6" opacity="0.42" fill="none"/><path d="M69.6 -1.7 q10.1 -3.2 20.3 -3.3" stroke="#9e9992" stroke-width="0.8" opacity="0.55" fill="none"/><path d="M250.7 88.1 q10.1 -4.4 20.1 -3.6" stroke="#9e9992" stroke-width="1.6" opacity="0.68" fill="none"/><path d="M94.0 84.6 q19.8 -4.3 39.5 -3.6" stroke="#827e78" stroke-width="1.5" opacity="0.47" fill="none"/><path d="M31.8 36.6 q9.3 -5.6 18.6 -4.0" stroke="#9e9992" stroke-width="2.4" opacity="0.60" fill="none"/><path d="M86.1 57.9 q6.9 -3.6 13.8 -3.4" stroke="#b4afa8" stroke-width="1.0" opacity="0.60" fill="none"/><path d="M222.5 73.0 q6.9 -5.0 13.8 -3.8" stroke="#bdb8b0" stroke-width="2.0" opacity="0.70" fill="none"/><path d="M162.4 46.0 q10.0 -4.0 20.0 -3.5" stroke="#bdb8b0" stroke-width="1.3" opacity="0.42" fill="none"/><path d="M47.2 -4.3 q12.0 -4.1 24.0 -3.6" stroke="#827e78" stroke-width="1.4" opacity="0.48" fill="none"/><path d="M-20.1 154.7 q9.6 -3.7 19.2 -3.5" stroke="#76726c" stroke-width="1.1" opacity="0.50" fill="none"/><path d="M106.2 86.0 q9.3 -4.6 18.6 -3.7" stroke="#b4afa8" stroke-width="1.7" opacity="0.39" fill="none"/><path d="M204.5 21.0 q15.7 -4.3 31.4 -3.6" stroke="#76726c" stroke-width="1.5" opacity="0.47" fill="none"/><path d="M36.8 101.0 q14.7 -5.2 29.5 -3.9" stroke="#9e9992" stroke-width="2.2" opacity="0.71" fill="none"/><path d="M195.0 103.0 q18.6 -5.1 37.2 -3.8" stroke="#bdb8b0" stroke-width="2.1" opacity="0.41" fill="none"/><path d="M177.8 111.4 q6.7 -5.5 13.4 -3.9" stroke="#827e78" stroke-width="2.3" opacity="0.60" fill="none"/><path d="M180.6 142.0 q8.3 -4.6 16.6 -3.7" stroke="#827e78" stroke-width="1.7" opacity="0.58" fill="none"/><path d="M203.3 -2.1 q17.3 -5.4 34.7 -3.9" stroke="#9e9992" stroke-width="2.2" opacity="0.62" fill="none"/><path d="M169.0 36.6 q6.5 -3.6 13.0 -3.4" stroke="#76726c" stroke-width="1.0" opacity="0.73" fill="none"/><path d="M78.1 76.7 q6.8 -3.3 13.7 -3.3" stroke="#827e78" stroke-width="0.8" opacity="0.62" fill="none"/><path d="M110.4 -4.4 q19.2 -5.2 38.3 -3.9" stroke="#827e78" stroke-width="2.1" opacity="0.71" fill="none"/><path d="M-3.6 90.2 q18.3 -4.5 36.6 -3.7" stroke="#b4afa8" stroke-width="1.7" opacity="0.69" fill="none"/><path d="M37.4 131.9 q9.8 -5.0 19.6 -3.8" stroke="#bdb8b0" stroke-width="2.0" opacity="0.55" fill="none"/><path d="M79.8 81.7 q17.3 -5.3 34.6 -3.9" stroke="#827e78" stroke-width="2.2" opacity="0.60" fill="none"/><path d="M26.9 103.5 q11.5 -5.0 22.9 -3.8" stroke="#9e9992" stroke-width="2.0" opacity="0.47" fill="none"/><path d="M132.9 -2.7 q7.0 -3.9 14.0 -3.5" stroke="#9e9992" stroke-width="1.3" opacity="0.39" fill="none"/><path d="M32.5 83.6 q17.7 -4.0 35.4 -3.5" stroke="#bdb8b0" stroke-width="1.3" opacity="0.54" fill="none"/><path d="M4.0 156.8 q9.3 -5.8 18.6 -4.0" stroke="#bdb8b0" stroke-width="2.6" opacity="0.36" fill="none"/><path d="M101.7 143.4 q22.0 -4.4 43.9 -3.6" stroke="#76726c" stroke-width="1.6" opacity="0.50" fill="none"/><path d="M233.1 163.4 q7.2 -3.4 14.5 -3.4" stroke="#9e9992" stroke-width="1.0" opacity="0.56" fill="none"/><path d="M243.4 19.0 q19.5 -4.6 39.1 -3.7" stroke="#b4afa8" stroke-width="1.7" opacity="0.63" fill="none"/><path d="M36.4 157.5 q14.0 -3.3 28.0 -3.3" stroke="#b4afa8" stroke-width="0.8" opacity="0.73" fill="none"/><path d="M165.6 68.4 q18.0 -4.3 36.0 -3.6" stroke="#bdb8b0" stroke-width="1.5" opacity="0.48" fill="none"/><path d="M211.1 -4.7 q18.4 -5.5 36.8 -3.9" stroke="#b4afa8" stroke-width="2.3" opacity="0.73" fill="none"/><path d="M26.2 -2.9 q18.2 -3.9 36.4 -3.5" stroke="#b4afa8" stroke-width="1.3" opacity="0.51" fill="none"/><path d="M256.7 101.6 q12.0 -4.4 23.9 -3.6" stroke="#76726c" stroke-width="1.6" opacity="0.69" fill="none"/><path d="M50.5 4.3 q16.9 -4.9 33.8 -3.8" stroke="#aaa59e" stroke-width="1.9" opacity="0.45" fill="none"/><path d="M46.3 87.5 q9.1 -4.2 18.3 -3.6" stroke="#bdb8b0" stroke-width="1.5" opacity="0.70" fill="none"/><path d="M203.0 109.2 q21.1 -5.7 42.1 -4.0" stroke="#827e78" stroke-width="2.5" opacity="0.43" fill="none"/><path d="M-6.9 164.0 q12.8 -4.9 25.6 -3.8" stroke="#aaa59e" stroke-width="1.9" opacity="0.61" fill="none"/><path d="M52.1 3.9 q21.3 -3.5 42.6 -3.4" stroke="#bdb8b0" stroke-width="1.0" opacity="0.52" fill="none"/><path d="M50.9 41.3 q18.2 -5.0 36.4 -3.8" stroke="#bdb8b0" stroke-width="2.0" opacity="0.61" fill="none"/><path d="M56.3 95.9 q12.5 -3.7 25.0 -3.4" stroke="#aaa59e" stroke-width="1.1" opacity="0.38" fill="none"/><path d="M113.7 141.9 q15.1 -4.4 30.2 -3.6" stroke="#76726c" stroke-width="1.6" opacity="0.75" fill="none"/><path d="M99.1 20.3 q9.2 -3.4 18.3 -3.4" stroke="#76726c" stroke-width="1.0" opacity="0.57" fill="none"/><path d="M61.6 61.7 q19.4 -3.7 38.7 -3.5" stroke="#b4afa8" stroke-width="1.2" opacity="0.65" fill="none"/><path d="M88.5 69.9 q14.6 -4.2 29.3 -3.6" stroke="#76726c" stroke-width="1.5" opacity="0.65" fill="none"/><path d="M113.0 98.9 q11.9 -5.1 23.9 -3.8" stroke="#827e78" stroke-width="2.0" opacity="0.60" fill="none"/><path d="M217.6 34.1 q10.5 -3.9 20.9 -3.5" stroke="#bdb8b0" stroke-width="1.2" opacity="0.61" fill="none"/><path d="M93.9 51.5 q19.4 -5.8 38.9 -4.0" stroke="#aaa59e" stroke-width="2.5" opacity="0.36" fill="none"/><path d="M173.6 157.1 q13.8 -4.8 27.6 -3.7" stroke="#b4afa8" stroke-width="1.9" opacity="0.38" fill="none"/><path d="M237.0 163.0 q14.7 -4.5 29.4 -3.7" stroke="#bdb8b0" stroke-width="1.6" opacity="0.45" fill="none"/><path d="M1.3 22.9 q14.6 -5.0 29.2 -3.8" stroke="#9e9992" stroke-width="2.0" opacity="0.63" fill="none"/><path d="M212.9 157.0 q7.4 -5.3 14.8 -3.9" stroke="#b4afa8" stroke-width="2.2" opacity="0.66" fill="none"/><path d="M36.7 161.5 q16.7 -4.0 33.3 -3.5" stroke="#aaa59e" stroke-width="1.3" opacity="0.60" fill="none"/><path d="M121.6 74.2 q18.6 -3.5 37.2 -3.4" stroke="#76726c" stroke-width="1.0" opacity="0.56" fill="none"/><path d="M137.3 65.2 q9.7 -4.8 19.4 -3.8" stroke="#b4afa8" stroke-width="1.9" opacity="0.56" fill="none"/><path d="M256.0 45.4 q11.2 -5.5 22.4 -3.9" stroke="#aaa59e" stroke-width="2.3" opacity="0.54" fill="none"/><path d="M37.4 39.7 q21.9 -5.1 43.7 -3.8" stroke="#76726c" stroke-width="2.1" opacity="0.37" fill="none"/><path d="M25.7 155.2 q16.7 -3.4 33.4 -3.4" stroke="#aaa59e" stroke-width="0.9" opacity="0.62" fill="none"/><path d="M235.5 36.0 q6.6 -4.1 13.1 -3.6" stroke="#bdb8b0" stroke-width="1.4" opacity="0.49" fill="none"/><path d="M83.8 -3.8 q10.8 -5.5 21.6 -3.9" stroke="#b4afa8" stroke-width="2.3" opacity="0.43" fill="none"/><path d="M248.3 51.4 q19.5 -3.8 39.1 -3.5" stroke="#aaa59e" stroke-width="1.2" opacity="0.46" fill="none"/><path d="M225.2 14.7 q16.3 -4.8 32.6 -3.8" stroke="#aaa59e" stroke-width="1.9" opacity="0.54" fill="none"/><path d="M231.3 5.2 q15.8 -5.7 31.6 -4.0" stroke="#b4afa8" stroke-width="2.5" opacity="0.44" fill="none"/><path d="M249.6 20.7 q6.9 -3.4 13.7 -3.4" stroke="#bdb8b0" stroke-width="0.9" opacity="0.53" fill="none"/><path d="M174.4 51.9 q7.9 -3.4 15.7 -3.4" stroke="#aaa59e" stroke-width="0.9" opacity="0.48" fill="none"/><path d="M23.2 164.4 q18.3 -3.3 36.6 -3.3" stroke="#9e9992" stroke-width="0.9" opacity="0.64" fill="none"/><path d="M210.8 173.3 q13.3 -3.5 26.6 -3.4" stroke="#b4afa8" stroke-width="1.0" opacity="0.46" fill="none"/><path d="M70.9 167.9 q8.0 -5.8 16.1 -4.0" stroke="#aaa59e" stroke-width="2.5" opacity="0.50" fill="none"/><path d="M190.6 50.9 q19.3 -3.4 38.5 -3.4" stroke="#9e9992" stroke-width="1.0" opacity="0.54" fill="none"/><path d="M77.0 161.4 q9.2 -4.2 18.4 -3.6" stroke="#bdb8b0" stroke-width="1.5" opacity="0.36" fill="none"/><path d="M87.9 141.9 q18.7 -3.3 37.3 -3.3" stroke="#b4afa8" stroke-width="0.9" opacity="0.54" fill="none"/><path d="M200.6 6.2 q9.2 -3.4 18.4 -3.4" stroke="#827e78" stroke-width="0.9" opacity="0.49" fill="none"/><path d="M48.2 168.3 q16.2 -3.9 32.4 -3.5" stroke="#9e9992" stroke-width="1.3" opacity="0.63" fill="none"/><path d="M235.3 48.8 q17.9 -4.8 35.8 -3.7" stroke="#9e9992" stroke-width="1.9" opacity="0.73" fill="none"/><path d="M0 50 L78 37 M175 23 L257 12 M0 122 L78 132 M175 145 L257 156" stroke="#5a5650" stroke-width="1" opacity="0.5"/><path d="M0 50 H17 V122 H0Z" fill="#3a3834"/><path d="M0 56 H14 V70 H0Z" fill="#3a5a78"/><path d="M0 70 H14 V92 H0Z" fill="#2a3028"/><path d="M0 92 H14 V114 H0Z" fill="#5a7a38"/><path d="M78 37 L175 24 L175 144 L78 132Z" fill="#3c3836"/><clipPath id="w7c"><path d="M85 40 L167 31 L167 135 L85 125Z"/></clipPath><g clip-path="url(#w7c)"><rect x="85" y="31" width="82" height="104" fill="url(#wsky)"/><path d="M85 31 H135.84 Q139.12 43.480000000000004 130.1 53.879999999999995 Q117.80000000000001 62.2 109.6 58.04 Q97.3 51.8 85 49.72Z" fill="#3e5a30"/><path d="M150.60000000000002 31 H167 V41.4 Q158.8 51.8 150.60000000000002 39.32Z" fill="#4a6a38"/><path d="M85 62.2 Q101.4 58.04 113.7 62.2 Q126.0 59.08 134.2 66.36 V72.6 H85Z" fill="#2e3c44"/><rect x="85" y="70.52000000000001" width="82" height="28.080000000000002" fill="#dedcd6"/><rect x="89.92" y="72.6" width="12.299999999999999" height="24.96" fill="#3c3c32"/><rect x="85" y="97.56" width="82" height="37.44" fill="#d6cebe"/><rect x="85" y="112.12" width="82" height="22.88" fill="#c8bca8"/><path d="M139.12 120.44 L140.76 74.68 L132.56 31 H136.66 L144.04 67.4 L153.88 31 H157.98000000000002 L148.14 74.68 L148.96 120.44Z" fill="#82785e"/><rect x="99.76" y="103.8" width="3" height="6" fill="#eeeae2"/><rect x="124.36" y="105.88" width="3" height="7" fill="#eeeae2"/></g><path d="M78 0 V171 M175 0 V171 M0 49 L257 12 M0 122 L257 156" stroke="#d4d43c" stroke-width="1.2" fill="none"/><circle cx="78" cy="37.5" r="2.6" fill="#f4f4d0" stroke="#d4d43c" stroke-width="0.7"/><circle cx="175" cy="23.5" r="2.6" fill="#f4f4d0" stroke="#d4d43c" stroke-width="0.7"/><circle cx="78" cy="132" r="2.6" fill="#f4f4d0" stroke="#d4d43c" stroke-width="0.7"/><circle cx="175" cy="145" r="2.6" fill="#f4f4d0" stroke="#d4d43c" stroke-width="0.7"/><rect x="10.5" y="60.5" width="85" height="47.5" fill="#252322" stroke="#c8c8c8" stroke-width="1"/><rect x="40.25" y="63.5" width="25.5" height="2" fill="#6a6a6a"/><rect x="16.5" y="70.5" width="14" height="7" fill="none" stroke="#888" stroke-width="0.6"/><rect x="37.5" y="70.5" width="52" height="7" fill="none" stroke="#777" stroke-width="0.6"/><rect x="63.5" y="70.5" width="13.0" height="7" fill="#777"/><rect x="16.5" y="81.5" width="12" height="1.5" fill="#666"/><rect x="37.5" y="79.5" width="52" height="7" fill="none" stroke="#777" stroke-width="0.6"/><rect x="16.5" y="92.5" width="10" height="1.5" fill="#555"/><rect x="37.5" y="92.5" width="50" height="1" fill="#777"/><path d="M121 81 H131 V77 L139 84 L131 91 V87 H121Z" fill="#f4f4f4"/><svg x="161" y="55" width="86" height="58" viewBox="0 0 86 58" preserveAspectRatio="none" overflow="hidden"><rect width="86" height="58" fill="#8a867e"/><path d="M0 20.299999999999997 H86 M0 35.96 H86" stroke="#6a665e" stroke-width="0.8"/><rect x="17.2" y="6.96" width="47.300000000000004" height="44.08" fill="#3a3634"/><rect x="21.5" y="10.44" width="38.699999999999996" height="37.12" fill="url(#wsky)"/><path d="M21.5 10.44 H45.494 Q47.042 14.8944 42.785 18.6064 Q36.98 21.576 33.11 20.0912 Q27.305 17.863999999999997 21.5 17.1216Z" fill="#3e5a30"/><path d="M52.459999999999994 10.44 H60.199999999999996 V14.152 Q56.33 17.863999999999997 52.459999999999994 13.4096Z" fill="#4a6a38"/><path d="M21.5 21.576 Q29.24 20.0912 35.045 21.576 Q40.849999999999994 20.4624 44.72 23.0608 V25.287999999999997 H21.5Z" fill="#2e3c44"/><rect x="21.5" y="24.5456" width="38.699999999999996" height="10.0224" fill="#dedcd6"/><rect x="23.822" y="25.287999999999997" width="5.804999999999999" height="8.9088" fill="#3c3c32"/><rect x="21.5" y="34.196799999999996" width="38.699999999999996" height="13.363199999999999" fill="#d6cebe"/><rect x="21.5" y="39.3936" width="38.699999999999996" height="8.1664" fill="#c8bca8"/><path d="M47.042 42.3632 L47.816 26.0304 L43.946 10.44 H45.881 L49.364 23.432 L54.007999999999996 10.44 H55.943 L51.29899999999999 26.0304 L51.68599999999999 42.3632Z" fill="#82785e"/><rect x="28.466" y="36.424" width="3" height="6" fill="#eeeae2"/><rect x="40.07599999999999" y="37.166399999999996" width="3" height="7" fill="#eeeae2"/></svg><rect x="161" y="55" width="86" height="58" fill="none" stroke="#e6e6e6" stroke-width="1.5"/></g><rect x="-0.5" y="-0.5" width="258" height="172" fill="none" stroke="#0c0c0c" stroke-width="1"/></g><g transform="translate(703.4,412.9)"><g clip-path="url(#tc)"><rect width="257" height="171" fill="#918c85"/><path d="M62.9 22.3 q16.7 -3.4 33.5 -3.4" stroke="#827e78" stroke-width="0.9" opacity="0.39" fill="none"/><path d="M137.3 159.7 q9.5 -3.4 19.1 -3.4" stroke="#bdb8b0" stroke-width="1.0" opacity="0.38" fill="none"/><path d="M-4.0 71.8 q19.6 -3.5 39.3 -3.4" stroke="#aaa59e" stroke-width="1.0" opacity="0.60" fill="none"/><path d="M137.3 6.2 q15.7 -3.3 31.3 -3.4" stroke="#aaa59e" stroke-width="0.9" opacity="0.37" fill="none"/><path d="M216.4 47.4 q8.4 -3.5 16.8 -3.4" stroke="#76726c" stroke-width="1.0" opacity="0.57" fill="none"/><path d="M165.7 13.7 q15.4 -3.7 30.8 -3.5" stroke="#b4afa8" stroke-width="1.1" opacity="0.57" fill="none"/><path d="M-12.0 5.8 q9.4 -5.0 18.8 -3.8" stroke="#bdb8b0" stroke-width="2.0" opacity="0.66" fill="none"/><path d="M103.6 162.1 q12.0 -3.9 23.9 -3.5" stroke="#aaa59e" stroke-width="1.2" opacity="0.63" fill="none"/><path d="M40.1 99.0 q14.7 -5.6 29.3 -4.0" stroke="#9e9992" stroke-width="2.4" opacity="0.53" fill="none"/><path d="M144.8 8.2 q14.4 -3.6 28.9 -3.4" stroke="#76726c" stroke-width="1.1" opacity="0.41" fill="none"/><path d="M110.3 2.1 q17.0 -5.3 34.1 -3.9" stroke="#827e78" stroke-width="2.2" opacity="0.67" fill="none"/><path d="M204.9 56.6 q11.8 -4.5 23.6 -3.7" stroke="#bdb8b0" stroke-width="1.7" opacity="0.38" fill="none"/><path d="M-3.1 43.9 q17.5 -3.4 35.0 -3.4" stroke="#9e9992" stroke-width="0.9" opacity="0.63" fill="none"/><path d="M155.7 174.8 q19.6 -4.0 39.1 -3.5" stroke="#bdb8b0" stroke-width="1.3" opacity="0.70" fill="none"/><path d="M69.6 165.3 q11.9 -4.8 23.7 -3.8" stroke="#bdb8b0" stroke-width="1.9" opacity="0.37" fill="none"/><path d="M190.5 18.4 q10.1 -4.3 20.2 -3.6" stroke="#bdb8b0" stroke-width="1.5" opacity="0.38" fill="none"/><path d="M98.9 94.4 q20.6 -5.4 41.2 -3.9" stroke="#827e78" stroke-width="2.3" opacity="0.46" fill="none"/><path d="M89.2 59.9 q20.6 -5.8 41.2 -4.0" stroke="#aaa59e" stroke-width="2.5" opacity="0.38" fill="none"/><path d="M13.4 114.2 q6.2 -5.4 12.4 -3.9" stroke="#aaa59e" stroke-width="2.3" opacity="0.46" fill="none"/><path d="M-28.8 70.8 q12.1 -4.7 24.2 -3.7" stroke="#aaa59e" stroke-width="1.8" opacity="0.63" fill="none"/><path d="M117.9 106.8 q17.2 -3.3 34.3 -3.4" stroke="#9e9992" stroke-width="0.9" opacity="0.67" fill="none"/><path d="M82.6 67.2 q7.7 -4.9 15.4 -3.8" stroke="#b4afa8" stroke-width="1.9" opacity="0.43" fill="none"/><path d="M252.6 74.8 q7.8 -4.8 15.6 -3.8" stroke="#b4afa8" stroke-width="1.9" opacity="0.35" fill="none"/><path d="M13.4 13.4 q12.0 -3.3 24.0 -3.3" stroke="#aaa59e" stroke-width="0.8" opacity="0.60" fill="none"/><path d="M12.6 40.7 q11.7 -4.2 23.5 -3.6" stroke="#b4afa8" stroke-width="1.5" opacity="0.40" fill="none"/><path d="M110.1 172.0 q13.9 -4.0 27.9 -3.5" stroke="#aaa59e" stroke-width="1.4" opacity="0.39" fill="none"/><path d="M68.3 42.9 q19.7 -3.6 39.4 -3.4" stroke="#b4afa8" stroke-width="1.1" opacity="0.43" fill="none"/><path d="M243.2 60.5 q17.4 -5.7 34.8 -4.0" stroke="#827e78" stroke-width="2.4" opacity="0.47" fill="none"/><path d="M154.5 11.5 q19.9 -4.6 39.9 -3.7" stroke="#aaa59e" stroke-width="1.7" opacity="0.49" fill="none"/><path d="M33.9 93.0 q14.3 -4.9 28.6 -3.8" stroke="#827e78" stroke-width="1.9" opacity="0.67" fill="none"/><path d="M252.7 149.3 q19.3 -5.4 38.6 -3.9" stroke="#9e9992" stroke-width="2.3" opacity="0.67" fill="none"/><path d="M27.4 84.2 q18.1 -5.9 36.1 -4.0" stroke="#76726c" stroke-width="2.6" opacity="0.54" fill="none"/><path d="M25.6 104.5 q11.7 -5.4 23.4 -3.9" stroke="#9e9992" stroke-width="2.3" opacity="0.75" fill="none"/><path d="M244.1 61.0 q9.6 -3.8 19.3 -3.5" stroke="#aaa59e" stroke-width="1.2" opacity="0.49" fill="none"/><path d="M108.5 173.3 q16.1 -3.2 32.1 -3.3" stroke="#9e9992" stroke-width="0.8" opacity="0.49" fill="none"/><path d="M154.6 146.1 q8.0 -4.2 16.0 -3.6" stroke="#9e9992" stroke-width="1.5" opacity="0.65" fill="none"/><path d="M107.2 27.3 q19.0 -4.1 38.0 -3.6" stroke="#9e9992" stroke-width="1.4" opacity="0.51" fill="none"/><path d="M85.2 166.4 q18.0 -3.7 35.9 -3.4" stroke="#aaa59e" stroke-width="1.1" opacity="0.36" fill="none"/><path d="M139.6 79.2 q16.8 -4.9 33.6 -3.8" stroke="#827e78" stroke-width="1.9" opacity="0.74" fill="none"/><path d="M158.6 58.4 q15.1 -3.6 30.1 -3.4" stroke="#b4afa8" stroke-width="1.0" opacity="0.67" fill="none"/><path d="M178.5 13.6 q18.4 -3.6 36.7 -3.4" stroke="#aaa59e" stroke-width="1.1" opacity="0.68" fill="none"/><path d="M30.6 40.6 q10.8 -3.8 21.7 -3.5" stroke="#827e78" stroke-width="1.2" opacity="0.48" fill="none"/><path d="M126.2 146.0 q7.0 -5.2 14.0 -3.9" stroke="#bdb8b0" stroke-width="2.1" opacity="0.61" fill="none"/><path d="M203.9 88.5 q19.6 -5.6 39.3 -4.0" stroke="#aaa59e" stroke-width="2.4" opacity="0.56" fill="none"/><path d="M120.2 -1.6 q13.3 -3.7 26.5 -3.5" stroke="#b4afa8" stroke-width="1.1" opacity="0.66" fill="none"/><path d="M13.0 20.6 q16.2 -3.5 32.4 -3.4" stroke="#b4afa8" stroke-width="1.0" opacity="0.48" fill="none"/><path d="M118.8 95.5 q18.9 -3.5 37.9 -3.4" stroke="#827e78" stroke-width="1.0" opacity="0.37" fill="none"/><path d="M24.9 2.6 q7.6 -4.4 15.2 -3.6" stroke="#b4afa8" stroke-width="1.6" opacity="0.65" fill="none"/><path d="M231.9 75.2 q16.1 -4.6 32.2 -3.7" stroke="#827e78" stroke-width="1.7" opacity="0.43" fill="none"/><path d="M49.6 87.0 q19.3 -4.6 38.6 -3.7" stroke="#aaa59e" stroke-width="1.7" opacity="0.63" fill="none"/><path d="M221.6 165.5 q10.3 -4.7 20.6 -3.7" stroke="#aaa59e" stroke-width="1.8" opacity="0.69" fill="none"/><path d="M9.4 17.0 q13.3 -3.4 26.6 -3.4" stroke="#aaa59e" stroke-width="0.9" opacity="0.52" fill="none"/><path d="M31.0 49.8 q8.0 -5.3 16.0 -3.9" stroke="#9e9992" stroke-width="2.2" opacity="0.61" fill="none"/><path d="M75.1 40.8 q8.3 -4.5 16.5 -3.7" stroke="#9e9992" stroke-width="1.6" opacity="0.73" fill="none"/><path d="M84.3 83.2 q22.3 -5.4 44.7 -3.9" stroke="#aaa59e" stroke-width="2.3" opacity="0.63" fill="none"/><path d="M255.3 68.1 q13.0 -4.2 25.9 -3.6" stroke="#b4afa8" stroke-width="1.4" opacity="0.64" fill="none"/><path d="M-24.4 95.3 q13.3 -3.2 26.5 -3.3" stroke="#76726c" stroke-width="0.8" opacity="0.56" fill="none"/><path d="M54.8 168.9 q7.9 -5.7 15.7 -4.0" stroke="#aaa59e" stroke-width="2.5" opacity="0.74" fill="none"/><path d="M0.1 43.1 q6.7 -5.3 13.3 -3.9" stroke="#76726c" stroke-width="2.2" opacity="0.65" fill="none"/><path d="M205.3 148.8 q17.2 -5.8 34.3 -4.0" stroke="#bdb8b0" stroke-width="2.5" opacity="0.41" fill="none"/><path d="M233.8 98.3 q17.6 -3.4 35.1 -3.4" stroke="#b4afa8" stroke-width="1.0" opacity="0.67" fill="none"/><path d="M22.6 157.0 q10.4 -3.2 20.9 -3.3" stroke="#b4afa8" stroke-width="0.8" opacity="0.67" fill="none"/><path d="M-6.0 150.0 q7.1 -5.5 14.2 -3.9" stroke="#bdb8b0" stroke-width="2.4" opacity="0.35" fill="none"/><path d="M255.4 70.6 q21.1 -4.9 42.2 -3.8" stroke="#b4afa8" stroke-width="1.9" opacity="0.56" fill="none"/><path d="M38.4 14.8 q8.7 -3.3 17.3 -3.4" stroke="#aaa59e" stroke-width="0.9" opacity="0.72" fill="none"/><path d="M150.4 91.1 q9.4 -4.4 18.8 -3.6" stroke="#9e9992" stroke-width="1.6" opacity="0.42" fill="none"/><path d="M69.6 -1.7 q10.1 -3.2 20.3 -3.3" stroke="#9e9992" stroke-width="0.8" opacity="0.55" fill="none"/><path d="M250.7 88.1 q10.1 -4.4 20.1 -3.6" stroke="#9e9992" stroke-width="1.6" opacity="0.68" fill="none"/><path d="M94.0 84.6 q19.8 -4.3 39.5 -3.6" stroke="#827e78" stroke-width="1.5" opacity="0.47" fill="none"/><path d="M31.8 36.6 q9.3 -5.6 18.6 -4.0" stroke="#9e9992" stroke-width="2.4" opacity="0.60" fill="none"/><path d="M86.1 57.9 q6.9 -3.6 13.8 -3.4" stroke="#b4afa8" stroke-width="1.0" opacity="0.60" fill="none"/><path d="M222.5 73.0 q6.9 -5.0 13.8 -3.8" stroke="#bdb8b0" stroke-width="2.0" opacity="0.70" fill="none"/><path d="M162.4 46.0 q10.0 -4.0 20.0 -3.5" stroke="#bdb8b0" stroke-width="1.3" opacity="0.42" fill="none"/><path d="M47.2 -4.3 q12.0 -4.1 24.0 -3.6" stroke="#827e78" stroke-width="1.4" opacity="0.48" fill="none"/><path d="M-20.1 154.7 q9.6 -3.7 19.2 -3.5" stroke="#76726c" stroke-width="1.1" opacity="0.50" fill="none"/><path d="M106.2 86.0 q9.3 -4.6 18.6 -3.7" stroke="#b4afa8" stroke-width="1.7" opacity="0.39" fill="none"/><path d="M204.5 21.0 q15.7 -4.3 31.4 -3.6" stroke="#76726c" stroke-width="1.5" opacity="0.47" fill="none"/><path d="M36.8 101.0 q14.7 -5.2 29.5 -3.9" stroke="#9e9992" stroke-width="2.2" opacity="0.71" fill="none"/><path d="M195.0 103.0 q18.6 -5.1 37.2 -3.8" stroke="#bdb8b0" stroke-width="2.1" opacity="0.41" fill="none"/><path d="M177.8 111.4 q6.7 -5.5 13.4 -3.9" stroke="#827e78" stroke-width="2.3" opacity="0.60" fill="none"/><path d="M180.6 142.0 q8.3 -4.6 16.6 -3.7" stroke="#827e78" stroke-width="1.7" opacity="0.58" fill="none"/><path d="M203.3 -2.1 q17.3 -5.4 34.7 -3.9" stroke="#9e9992" stroke-width="2.2" opacity="0.62" fill="none"/><path d="M169.0 36.6 q6.5 -3.6 13.0 -3.4" stroke="#76726c" stroke-width="1.0" opacity="0.73" fill="none"/><path d="M78.1 76.7 q6.8 -3.3 13.7 -3.3" stroke="#827e78" stroke-width="0.8" opacity="0.62" fill="none"/><path d="M110.4 -4.4 q19.2 -5.2 38.3 -3.9" stroke="#827e78" stroke-width="2.1" opacity="0.71" fill="none"/><path d="M-3.6 90.2 q18.3 -4.5 36.6 -3.7" stroke="#b4afa8" stroke-width="1.7" opacity="0.69" fill="none"/><path d="M37.4 131.9 q9.8 -5.0 19.6 -3.8" stroke="#bdb8b0" stroke-width="2.0" opacity="0.55" fill="none"/><path d="M79.8 81.7 q17.3 -5.3 34.6 -3.9" stroke="#827e78" stroke-width="2.2" opacity="0.60" fill="none"/><path d="M26.9 103.5 q11.5 -5.0 22.9 -3.8" stroke="#9e9992" stroke-width="2.0" opacity="0.47" fill="none"/><path d="M132.9 -2.7 q7.0 -3.9 14.0 -3.5" stroke="#9e9992" stroke-width="1.3" opacity="0.39" fill="none"/><path d="M32.5 83.6 q17.7 -4.0 35.4 -3.5" stroke="#bdb8b0" stroke-width="1.3" opacity="0.54" fill="none"/><path d="M4.0 156.8 q9.3 -5.8 18.6 -4.0" stroke="#bdb8b0" stroke-width="2.6" opacity="0.36" fill="none"/><path d="M101.7 143.4 q22.0 -4.4 43.9 -3.6" stroke="#76726c" stroke-width="1.6" opacity="0.50" fill="none"/><path d="M233.1 163.4 q7.2 -3.4 14.5 -3.4" stroke="#9e9992" stroke-width="1.0" opacity="0.56" fill="none"/><path d="M243.4 19.0 q19.5 -4.6 39.1 -3.7" stroke="#b4afa8" stroke-width="1.7" opacity="0.63" fill="none"/><path d="M36.4 157.5 q14.0 -3.3 28.0 -3.3" stroke="#b4afa8" stroke-width="0.8" opacity="0.73" fill="none"/><path d="M165.6 68.4 q18.0 -4.3 36.0 -3.6" stroke="#bdb8b0" stroke-width="1.5" opacity="0.48" fill="none"/><path d="M211.1 -4.7 q18.4 -5.5 36.8 -3.9" stroke="#b4afa8" stroke-width="2.3" opacity="0.73" fill="none"/><path d="M26.2 -2.9 q18.2 -3.9 36.4 -3.5" stroke="#b4afa8" stroke-width="1.3" opacity="0.51" fill="none"/><path d="M256.7 101.6 q12.0 -4.4 23.9 -3.6" stroke="#76726c" stroke-width="1.6" opacity="0.69" fill="none"/><path d="M50.5 4.3 q16.9 -4.9 33.8 -3.8" stroke="#aaa59e" stroke-width="1.9" opacity="0.45" fill="none"/><path d="M46.3 87.5 q9.1 -4.2 18.3 -3.6" stroke="#bdb8b0" stroke-width="1.5" opacity="0.70" fill="none"/><path d="M203.0 109.2 q21.1 -5.7 42.1 -4.0" stroke="#827e78" stroke-width="2.5" opacity="0.43" fill="none"/><path d="M-6.9 164.0 q12.8 -4.9 25.6 -3.8" stroke="#aaa59e" stroke-width="1.9" opacity="0.61" fill="none"/><path d="M52.1 3.9 q21.3 -3.5 42.6 -3.4" stroke="#bdb8b0" stroke-width="1.0" opacity="0.52" fill="none"/><path d="M50.9 41.3 q18.2 -5.0 36.4 -3.8" stroke="#bdb8b0" stroke-width="2.0" opacity="0.61" fill="none"/><path d="M56.3 95.9 q12.5 -3.7 25.0 -3.4" stroke="#aaa59e" stroke-width="1.1" opacity="0.38" fill="none"/><path d="M113.7 141.9 q15.1 -4.4 30.2 -3.6" stroke="#76726c" stroke-width="1.6" opacity="0.75" fill="none"/><path d="M99.1 20.3 q9.2 -3.4 18.3 -3.4" stroke="#76726c" stroke-width="1.0" opacity="0.57" fill="none"/><path d="M61.6 61.7 q19.4 -3.7 38.7 -3.5" stroke="#b4afa8" stroke-width="1.2" opacity="0.65" fill="none"/><path d="M88.5 69.9 q14.6 -4.2 29.3 -3.6" stroke="#76726c" stroke-width="1.5" opacity="0.65" fill="none"/><path d="M113.0 98.9 q11.9 -5.1 23.9 -3.8" stroke="#827e78" stroke-width="2.0" opacity="0.60" fill="none"/><path d="M217.6 34.1 q10.5 -3.9 20.9 -3.5" stroke="#bdb8b0" stroke-width="1.2" opacity="0.61" fill="none"/><path d="M93.9 51.5 q19.4 -5.8 38.9 -4.0" stroke="#aaa59e" stroke-width="2.5" opacity="0.36" fill="none"/><path d="M173.6 157.1 q13.8 -4.8 27.6 -3.7" stroke="#b4afa8" stroke-width="1.9" opacity="0.38" fill="none"/><path d="M237.0 163.0 q14.7 -4.5 29.4 -3.7" stroke="#bdb8b0" stroke-width="1.6" opacity="0.45" fill="none"/><path d="M1.3 22.9 q14.6 -5.0 29.2 -3.8" stroke="#9e9992" stroke-width="2.0" opacity="0.63" fill="none"/><path d="M212.9 157.0 q7.4 -5.3 14.8 -3.9" stroke="#b4afa8" stroke-width="2.2" opacity="0.66" fill="none"/><path d="M36.7 161.5 q16.7 -4.0 33.3 -3.5" stroke="#aaa59e" stroke-width="1.3" opacity="0.60" fill="none"/><path d="M121.6 74.2 q18.6 -3.5 37.2 -3.4" stroke="#76726c" stroke-width="1.0" opacity="0.56" fill="none"/><path d="M137.3 65.2 q9.7 -4.8 19.4 -3.8" stroke="#b4afa8" stroke-width="1.9" opacity="0.56" fill="none"/><path d="M256.0 45.4 q11.2 -5.5 22.4 -3.9" stroke="#aaa59e" stroke-width="2.3" opacity="0.54" fill="none"/><path d="M37.4 39.7 q21.9 -5.1 43.7 -3.8" stroke="#76726c" stroke-width="2.1" opacity="0.37" fill="none"/><path d="M25.7 155.2 q16.7 -3.4 33.4 -3.4" stroke="#aaa59e" stroke-width="0.9" opacity="0.62" fill="none"/><path d="M235.5 36.0 q6.6 -4.1 13.1 -3.6" stroke="#bdb8b0" stroke-width="1.4" opacity="0.49" fill="none"/><path d="M83.8 -3.8 q10.8 -5.5 21.6 -3.9" stroke="#b4afa8" stroke-width="2.3" opacity="0.43" fill="none"/><path d="M248.3 51.4 q19.5 -3.8 39.1 -3.5" stroke="#aaa59e" stroke-width="1.2" opacity="0.46" fill="none"/><path d="M225.2 14.7 q16.3 -4.8 32.6 -3.8" stroke="#aaa59e" stroke-width="1.9" opacity="0.54" fill="none"/><path d="M231.3 5.2 q15.8 -5.7 31.6 -4.0" stroke="#b4afa8" stroke-width="2.5" opacity="0.44" fill="none"/><path d="M249.6 20.7 q6.9 -3.4 13.7 -3.4" stroke="#bdb8b0" stroke-width="0.9" opacity="0.53" fill="none"/><path d="M174.4 51.9 q7.9 -3.4 15.7 -3.4" stroke="#aaa59e" stroke-width="0.9" opacity="0.48" fill="none"/><path d="M23.2 164.4 q18.3 -3.3 36.6 -3.3" stroke="#9e9992" stroke-width="0.9" opacity="0.64" fill="none"/><path d="M210.8 173.3 q13.3 -3.5 26.6 -3.4" stroke="#b4afa8" stroke-width="1.0" opacity="0.46" fill="none"/><path d="M70.9 167.9 q8.0 -5.8 16.1 -4.0" stroke="#aaa59e" stroke-width="2.5" opacity="0.50" fill="none"/><path d="M190.6 50.9 q19.3 -3.4 38.5 -3.4" stroke="#9e9992" stroke-width="1.0" opacity="0.54" fill="none"/><path d="M77.0 161.4 q9.2 -4.2 18.4 -3.6" stroke="#bdb8b0" stroke-width="1.5" opacity="0.36" fill="none"/><path d="M87.9 141.9 q18.7 -3.3 37.3 -3.3" stroke="#b4afa8" stroke-width="0.9" opacity="0.54" fill="none"/><path d="M200.6 6.2 q9.2 -3.4 18.4 -3.4" stroke="#827e78" stroke-width="0.9" opacity="0.49" fill="none"/><path d="M48.2 168.3 q16.2 -3.9 32.4 -3.5" stroke="#9e9992" stroke-width="1.3" opacity="0.63" fill="none"/><path d="M235.3 48.8 q17.9 -4.8 35.8 -3.7" stroke="#9e9992" stroke-width="1.9" opacity="0.73" fill="none"/><path d="M0 47 L78 40 M0 72 L78 70 M0 100 L78 100 M175 25 L257 14 M175 58 L257 54 M175 105 L257 108 M175 145 L257 150 M0 130 L78 132" stroke="#5a5650" stroke-width="1" opacity="0.6"/><path d="M0 47 H17 V118 H0Z" fill="#34322e"/><path d="M0 52 H14 V66 H0Z" fill="#3a5a78"/><path d="M0 66 H14 V88 H0Z" fill="#2a3028"/><path d="M0 88 H14 V108 H0Z" fill="#5a7a38"/><path d="M0 108 H14 V115 H0Z" fill="#c8c8c0"/><path d="M78 38 L176 24 L176 145 L78 132Z" fill="#3c3836"/><clipPath id="w8c"><path d="M86 42 L167 33 L167 137 L86 128Z"/></clipPath><g clip-path="url(#w8c)"><rect x="86" y="33" width="81" height="104" fill="url(#wsky)"/><path d="M86 33 H136.22 Q139.46 45.480000000000004 130.55 55.879999999999995 Q118.4 64.2 110.3 60.04 Q98.15 53.8 86 51.72Z" fill="#3e5a30"/><path d="M150.8 33 H167 V43.4 Q158.9 53.8 150.8 41.32Z" fill="#4a6a38"/><path d="M86 64.2 Q102.2 60.04 114.35 64.2 Q126.5 61.08 134.6 68.36 V74.6 H86Z" fill="#2e3c44"/><rect x="86" y="72.52000000000001" width="81" height="28.080000000000002" fill="#dedcd6"/><rect x="90.86" y="74.6" width="12.15" height="24.96" fill="#3c3c32"/><rect x="86" y="99.56" width="81" height="37.44" fill="#d6cebe"/><rect x="86" y="114.12" width="81" height="22.88" fill="#c8bca8"/><path d="M139.46 122.44 L141.08 76.68 L132.98 33 H137.03 L144.32 69.4 L154.04 33 H158.09 L148.37 76.68 L149.18 122.44Z" fill="#82785e"/><rect x="100.58" y="105.8" width="3" height="6" fill="#eeeae2"/><rect x="124.88" y="107.88" width="3" height="7" fill="#eeeae2"/></g></g><rect x="-0.5" y="-0.5" width="258" height="172" fill="none" stroke="#0c0c0c" stroke-width="1"/></g><g transform="translate(1005.6,412.9)"><g clip-path="url(#tc)"><rect width="257" height="171" fill="url(#rsky)"/><path d="M160 0 H257 V28 Q210 18 160 0Z" fill="#bcd2e8" opacity="0.7"/><path d="M0 36 L30 34 L60 30 L80 27 L110 24 L140 22 L170 22 L200 20 L215 16 L235 19 L245 14 L257 13 V48 H0Z" fill="#c8ccd0"/><path d="M200 20 L214 14 L222 20Z M240 16 L257 12 V26 L238 28Z" fill="#d8dade"/><path d="M0 40 Q12 34 24 38 Q40 32 60 36 Q80 28 100 31 Q120 25 150 28 Q180 24 210 29 Q235 25 257 28 V48 H0Z" fill="#828a4a"/><path d="M0 38 Q12 33 26 38 V50 H0Z" fill="#5a6a48"/><path d="M60 38 Q80 33 100 35 Q120 30 140 34 V46 H60Z" fill="#7a8444" opacity="0.8"/><path d="M170 30 Q190 27 210 32 Q235 29 257 31 V46 H170Z" fill="#6e7a44" opacity="0.7"/><path d="M24 42 H257 V52 H24Z" fill="#b0b2ae"/><path d="M0 48 H257 V53 H0Z" fill="#a0a6a4"/><path d="M0 52 H257 V95 L180 80 L0 64Z" fill="url(#rriver)"/><path d="M0 64 L180 80 L257 95 V171 H0Z" fill="url(#rquay)"/><path d="M40 58 H152 V80 H40Z" fill="#c8ccd0"/><path d="M46 58 L80 57 V66 H46Z" fill="#b03848"/><path d="M76 60 H150 V64 H76Z" fill="#e4e6e8"/><path d="M98 65 H150 V76 H98Z" fill="#6a7078"/><path d="M152 66 H194 L188 76 H152Z" fill="#eef0f2"/><path d="M152 72 H190 V76 H152Z" fill="#5a646e"/><rect x="143" y="30" width="6" height="24" fill="#4e74c4"/><rect x="150" y="31" width="7" height="25" fill="#e2e2ea"/><rect x="163" y="28" width="8" height="28" fill="#d44656"/><rect x="133" y="60" width="3" height="12" fill="#d04a60"/><path d="M110 120 L257 150 V158 L110 128Z" fill="#9ea4ac" opacity="0.55"/><path d="M130 140 L257 171 H200 L120 148Z" fill="#9ea4ac" opacity="0.55"/><path d="M125 95 L170 110 L168 118 L120 102Z" fill="#a4aab0" opacity="0.5"/><path d="M173 79 L203 81 L202 88 L173 87Z" fill="#dcdad4"/><path d="M174 87 L154 128 L158 129 L178 88Z" fill="#8a9098"/><path d="M196 88 H204 V143 H196Z" fill="#9aa0a6"/><path d="M18 68 L110 74 L140 82 L128 110 L110 140 L95 171 H40 L20 135Z" fill="#9a9a90"/><path d="M20 88 L80 90 L70 110 L24 112Z" fill="#c4c4bc" opacity="0.9"/><circle cx="99.4" cy="76.1" r="1.2" fill="#3a3c3c" opacity="0.75"/><circle cx="119.6" cy="88.3" r="1.5" fill="#3a3c3c" opacity="0.75"/><circle cx="134.6" cy="101.6" r="2.4" fill="#3a3c3c" opacity="0.75"/><circle cx="85.3" cy="112.3" r="1.4" fill="#3a3c3c" opacity="0.75"/><circle cx="100.3" cy="126.7" r="1.9" fill="#3a3c3c" opacity="0.75"/><circle cx="110.4" cy="114.3" r="1.3" fill="#3a3c3c" opacity="0.75"/><circle cx="112.0" cy="109.2" r="1.6" fill="#3a3c3c" opacity="0.75"/><circle cx="42.9" cy="126.5" r="1.9" fill="#3a3c3c" opacity="0.75"/><circle cx="108.3" cy="127.4" r="2.2" fill="#3a3c3c" opacity="0.75"/><circle cx="127.5" cy="96.9" r="2.3" fill="#3a3c3c" opacity="0.75"/><circle cx="82.2" cy="130.9" r="2.4" fill="#3a3c3c" opacity="0.75"/><circle cx="49.3" cy="80.6" r="1.5" fill="#3a3c3c" opacity="0.75"/><circle cx="131.7" cy="99.5" r="2.1" fill="#3a3c3c" opacity="0.75"/><circle cx="95.6" cy="108.8" r="2.5" fill="#3a3c3c" opacity="0.75"/><circle cx="104.8" cy="130.5" r="2.4" fill="#3a3c3c" opacity="0.75"/><circle cx="134.1" cy="114.3" r="1.4" fill="#3a3c3c" opacity="0.75"/><circle cx="121.8" cy="132.8" r="2.5" fill="#3a3c3c" opacity="0.75"/><circle cx="94.1" cy="117.0" r="1.5" fill="#3a3c3c" opacity="0.75"/><circle cx="119.0" cy="108.1" r="1.6" fill="#3a3c3c" opacity="0.75"/><circle cx="46.0" cy="125.8" r="2.6" fill="#3a3c3c" opacity="0.75"/><circle cx="48.4" cy="122.4" r="1.8" fill="#3a3c3c" opacity="0.75"/><circle cx="113.0" cy="127.0" r="1.3" fill="#3a3c3c" opacity="0.75"/><circle cx="98.4" cy="74.8" r="2.2" fill="#3a3c3c" opacity="0.75"/><circle cx="71.4" cy="127.5" r="2.6" fill="#3a3c3c" opacity="0.75"/><circle cx="88.0" cy="134.9" r="1.6" fill="#3a3c3c" opacity="0.75"/><circle cx="43.0" cy="84.4" r="1.8" fill="#3a3c3c" opacity="0.75"/><circle cx="98.0" cy="81.8" r="1.3" fill="#3a3c3c" opacity="0.75"/><circle cx="122.4" cy="91.8" r="2.5" fill="#3a3c3c" opacity="0.75"/><circle cx="125.2" cy="95.8" r="1.8" fill="#3a3c3c" opacity="0.75"/><circle cx="89.4" cy="112.6" r="2.0" fill="#3a3c3c" opacity="0.75"/><circle cx="93.1" cy="111.1" r="2.5" fill="#3a3c3c" opacity="0.75"/><circle cx="88.2" cy="99.2" r="2.2" fill="#3a3c3c" opacity="0.75"/><circle cx="132.9" cy="104.8" r="2.0" fill="#3a3c3c" opacity="0.75"/><circle cx="62" cy="92" r="6" fill="#d8d040" opacity="0.9"/><circle cx="98" cy="90" r="6" fill="#a8c050" opacity="0.9"/><circle cx="88" cy="118" r="7" fill="#98b048" opacity="0.9"/><circle cx="120" cy="128" r="6" fill="#a0b850" opacity="0.9"/><circle cx="100" cy="160" r="9" fill="#8aa850" opacity="0.9"/><circle cx="32" cy="80" r="5" fill="#a0b050" opacity="0.9"/><circle cx="50" cy="76" r="5" fill="#b0b858" opacity="0.9"/><circle cx="80" cy="74" r="4" fill="#a8b858" opacity="0.9"/><path d="M20 124 L57 106 L64 116 L28 134Z" fill="#a42434"/><path d="M103 84 L124 79 L127 86 L105 91Z" fill="#c84048"/><circle cx="94" cy="132" r="3" fill="#c02030"/><circle cx="124" cy="144" r="3" fill="#c02030"/><path d="M18 133 L60 126 L90 140 L40 150Z" fill="#b8b6ae"/><path d="M40 150 L90 140 L95 171 H50Z" fill="#4a5058"/><path d="M25 140 L40 150 L50 171 H30Z" fill="#5a6068"/><path d="M0 66 Q18 74 24 100 Q30 130 18 152 L0 150Z" fill="#3c4a38"/><path d="M8 150 Q20 140 30 152 L40 171 H20Z" fill="#5a7a44"/><path d="M0 146 L28 171 H0Z" fill="#b8b0a0"/><path d="M0 62 L257 90" stroke="#e0c820" stroke-width="2.6" opacity="0.8"/><path d="M0 82 L164 127" stroke="#e0c820" stroke-width="2.6" opacity="0.8"/><path d="M60 2 L164 13" stroke="#e0c820" stroke-width="1" opacity="0.4"/><rect x="165" y="14" width="85" height="45" fill="#252322" stroke="#c8c8c8" stroke-width="1"/><rect x="194.75" y="17" width="25.5" height="2" fill="#6a6a6a"/><rect x="171" y="24" width="11" height="7" fill="#888"/><rect x="171" y="38" width="12" height="1.5" fill="#666"/><rect x="194" y="36" width="50" height="6" fill="none" stroke="#777" stroke-width="0.6"/><rect x="171" y="48" width="3" height="3" fill="#666"/><rect x="177" y="49" width="26" height="1.2" fill="#555"/><rect x="207" y="48" width="3" height="3" fill="#666"/><rect x="213" y="49" width="26" height="1.2" fill="#555"/><path d="M205.8 76 H210.2 V85 H213.5 L208 92 L202.5 85 H205.8Z" fill="#ffffff" stroke="none" stroke-width="0.7"/><svg x="165" y="104" width="86" height="57" viewBox="0 0 257 171" preserveAspectRatio="none" overflow="hidden"><rect width="257" height="171" fill="url(#rsky)"/><path d="M160 0 H257 V28 Q210 18 160 0Z" fill="#bcd2e8" opacity="0.7"/><path d="M0 36 L30 34 L60 30 L80 27 L110 24 L140 22 L170 22 L200 20 L215 16 L235 19 L245 14 L257 13 V48 H0Z" fill="#c8ccd0"/><path d="M200 20 L214 14 L222 20Z M240 16 L257 12 V26 L238 28Z" fill="#d8dade"/><path d="M0 40 Q12 34 24 38 Q40 32 60 36 Q80 28 100 31 Q120 25 150 28 Q180 24 210 29 Q235 25 257 28 V48 H0Z" fill="#828a4a"/><path d="M0 38 Q12 33 26 38 V50 H0Z" fill="#5a6a48"/><path d="M60 38 Q80 33 100 35 Q120 30 140 34 V46 H60Z" fill="#7a8444" opacity="0.8"/><path d="M170 30 Q190 27 210 32 Q235 29 257 31 V46 H170Z" fill="#6e7a44" opacity="0.7"/><path d="M24 42 H257 V52 H24Z" fill="#b0b2ae"/><path d="M0 48 H257 V53 H0Z" fill="#a0a6a4"/><path d="M0 52 H257 V95 L180 80 L0 64Z" fill="url(#rriver)"/><path d="M0 64 L180 80 L257 95 V171 H0Z" fill="url(#rquay)"/><path d="M40 58 H152 V80 H40Z" fill="#c8ccd0"/><path d="M46 58 L80 57 V66 H46Z" fill="#b03848"/><path d="M76 60 H150 V64 H76Z" fill="#e4e6e8"/><path d="M98 65 H150 V76 H98Z" fill="#6a7078"/><path d="M152 66 H194 L188 76 H152Z" fill="#eef0f2"/><path d="M152 72 H190 V76 H152Z" fill="#5a646e"/><rect x="143" y="30" width="6" height="24" fill="#4e74c4"/><rect x="150" y="31" width="7" height="25" fill="#e2e2ea"/><rect x="163" y="28" width="8" height="28" fill="#d44656"/><rect x="133" y="60" width="3" height="12" fill="#d04a60"/><path d="M110 120 L257 150 V158 L110 128Z" fill="#9ea4ac" opacity="0.55"/><path d="M130 140 L257 171 H200 L120 148Z" fill="#9ea4ac" opacity="0.55"/><path d="M125 95 L170 110 L168 118 L120 102Z" fill="#a4aab0" opacity="0.5"/><path d="M173 79 L203 81 L202 88 L173 87Z" fill="#dcdad4"/><path d="M174 87 L154 128 L158 129 L178 88Z" fill="#8a9098"/><path d="M196 88 H204 V143 H196Z" fill="#9aa0a6"/><path d="M18 68 L110 74 L140 82 L128 110 L110 140 L95 171 H40 L20 135Z" fill="#9a9a90"/><path d="M20 88 L80 90 L70 110 L24 112Z" fill="#c4c4bc" opacity="0.9"/><circle cx="99.4" cy="76.1" r="1.2" fill="#3a3c3c" opacity="0.75"/><circle cx="119.6" cy="88.3" r="1.5" fill="#3a3c3c" opacity="0.75"/><circle cx="134.6" cy="101.6" r="2.4" fill="#3a3c3c" opacity="0.75"/><circle cx="85.3" cy="112.3" r="1.4" fill="#3a3c3c" opacity="0.75"/><circle cx="100.3" cy="126.7" r="1.9" fill="#3a3c3c" opacity="0.75"/><circle cx="110.4" cy="114.3" r="1.3" fill="#3a3c3c" opacity="0.75"/><circle cx="112.0" cy="109.2" r="1.6" fill="#3a3c3c" opacity="0.75"/><circle cx="42.9" cy="126.5" r="1.9" fill="#3a3c3c" opacity="0.75"/><circle cx="108.3" cy="127.4" r="2.2" fill="#3a3c3c" opacity="0.75"/><circle cx="127.5" cy="96.9" r="2.3" fill="#3a3c3c" opacity="0.75"/><circle cx="82.2" cy="130.9" r="2.4" fill="#3a3c3c" opacity="0.75"/><circle cx="49.3" cy="80.6" r="1.5" fill="#3a3c3c" opacity="0.75"/><circle cx="131.7" cy="99.5" r="2.1" fill="#3a3c3c" opacity="0.75"/><circle cx="95.6" cy="108.8" r="2.5" fill="#3a3c3c" opacity="0.75"/><circle cx="104.8" cy="130.5" r="2.4" fill="#3a3c3c" opacity="0.75"/><circle cx="134.1" cy="114.3" r="1.4" fill="#3a3c3c" opacity="0.75"/><circle cx="121.8" cy="132.8" r="2.5" fill="#3a3c3c" opacity="0.75"/><circle cx="94.1" cy="117.0" r="1.5" fill="#3a3c3c" opacity="0.75"/><circle cx="119.0" cy="108.1" r="1.6" fill="#3a3c3c" opacity="0.75"/><circle cx="46.0" cy="125.8" r="2.6" fill="#3a3c3c" opacity="0.75"/><circle cx="48.4" cy="122.4" r="1.8" fill="#3a3c3c" opacity="0.75"/><circle cx="113.0" cy="127.0" r="1.3" fill="#3a3c3c" opacity="0.75"/><circle cx="98.4" cy="74.8" r="2.2" fill="#3a3c3c" opacity="0.75"/><circle cx="71.4" cy="127.5" r="2.6" fill="#3a3c3c" opacity="0.75"/><circle cx="88.0" cy="134.9" r="1.6" fill="#3a3c3c" opacity="0.75"/><circle cx="43.0" cy="84.4" r="1.8" fill="#3a3c3c" opacity="0.75"/><circle cx="98.0" cy="81.8" r="1.3" fill="#3a3c3c" opacity="0.75"/><circle cx="122.4" cy="91.8" r="2.5" fill="#3a3c3c" opacity="0.75"/><circle cx="125.2" cy="95.8" r="1.8" fill="#3a3c3c" opacity="0.75"/><circle cx="89.4" cy="112.6" r="2.0" fill="#3a3c3c" opacity="0.75"/><circle cx="93.1" cy="111.1" r="2.5" fill="#3a3c3c" opacity="0.75"/><circle cx="88.2" cy="99.2" r="2.2" fill="#3a3c3c" opacity="0.75"/><circle cx="132.9" cy="104.8" r="2.0" fill="#3a3c3c" opacity="0.75"/><circle cx="62" cy="92" r="6" fill="#d8d040" opacity="0.9"/><circle cx="98" cy="90" r="6" fill="#a8c050" opacity="0.9"/><circle cx="88" cy="118" r="7" fill="#98b048" opacity="0.9"/><circle cx="120" cy="128" r="6" fill="#a0b850" opacity="0.9"/><circle cx="100" cy="160" r="9" fill="#8aa850" opacity="0.9"/><circle cx="32" cy="80" r="5" fill="#a0b050" opacity="0.9"/><circle cx="50" cy="76" r="5" fill="#b0b858" opacity="0.9"/><circle cx="80" cy="74" r="4" fill="#a8b858" opacity="0.9"/><path d="M20 124 L57 106 L64 116 L28 134Z" fill="#a42434"/><path d="M103 84 L124 79 L127 86 L105 91Z" fill="#c84048"/><circle cx="94" cy="132" r="3" fill="#c02030"/><circle cx="124" cy="144" r="3" fill="#c02030"/><path d="M18 133 L60 126 L90 140 L40 150Z" fill="#b8b6ae"/><path d="M40 150 L90 140 L95 171 H50Z" fill="#4a5058"/><path d="M25 140 L40 150 L50 171 H30Z" fill="#5a6068"/><path d="M0 66 Q18 74 24 100 Q30 130 18 152 L0 150Z" fill="#3c4a38"/><path d="M8 150 Q20 140 30 152 L40 171 H20Z" fill="#5a7a44"/><path d="M0 146 L28 171 H0Z" fill="#b8b0a0"/></svg><rect x="165" y="104" width="86" height="57" fill="none" stroke="#e6e6e6" stroke-width="1.5"/></g><rect x="-0.5" y="-0.5" width="258" height="172" fill="none" stroke="#0c0c0c" stroke-width="1"/></g><g transform="translate(1307.8,412.9)"><g clip-path="url(#tc)"><rect width="257" height="171" fill="url(#rsky)"/><path d="M160 0 H257 V28 Q210 18 160 0Z" fill="#bcd2e8" opacity="0.7"/><path d="M0 36 L30 34 L60 30 L80 27 L110 24 L140 22 L170 22 L200 20 L215 16 L235 19 L245 14 L257 13 V48 H0Z" fill="#c8ccd0"/><path d="M200 20 L214 14 L222 20Z M240 16 L257 12 V26 L238 28Z" fill="#d8dade"/><path d="M0 40 Q12 34 24 38 Q40 32 60 36 Q80 28 100 31 Q120 25 150 28 Q180 24 210 29 Q235 25 257 28 V48 H0Z" fill="#828a4a"/><path d="M0 38 Q12 33 26 38 V50 H0Z" fill="#5a6a48"/><path d="M60 38 Q80 33 100 35 Q120 30 140 34 V46 H60Z" fill="#7a8444" opacity="0.8"/><path d="M170 30 Q190 27 210 32 Q235 29 257 31 V46 H170Z" fill="#6e7a44" opacity="0.7"/><path d="M24 42 H257 V52 H24Z" fill="#b0b2ae"/><path d="M0 48 H257 V53 H0Z" fill="#a0a6a4"/><path d="M0 52 H257 V95 L180 80 L0 64Z" fill="url(#rriver)"/><path d="M0 64 L180 80 L257 95 V171 H0Z" fill="url(#rquay)"/><path d="M40 58 H152 V80 H40Z" fill="#c8ccd0"/><path d="M46 58 L80 57 V66 H46Z" fill="#b03848"/><path d="M76 60 H150 V64 H76Z" fill="#e4e6e8"/><path d="M98 65 H150 V76 H98Z" fill="#6a7078"/><path d="M152 66 H194 L188 76 H152Z" fill="#eef0f2"/><path d="M152 72 H190 V76 H152Z" fill="#5a646e"/><rect x="143" y="30" width="6" height="24" fill="#4e74c4"/><rect x="150" y="31" width="7" height="25" fill="#e2e2ea"/><rect x="163" y="28" width="8" height="28" fill="#d44656"/><rect x="133" y="60" width="3" height="12" fill="#d04a60"/><path d="M110 120 L257 150 V158 L110 128Z" fill="#9ea4ac" opacity="0.55"/><path d="M130 140 L257 171 H200 L120 148Z" fill="#9ea4ac" opacity="0.55"/><path d="M125 95 L170 110 L168 118 L120 102Z" fill="#a4aab0" opacity="0.5"/><path d="M173 79 L203 81 L202 88 L173 87Z" fill="#dcdad4"/><path d="M174 87 L154 128 L158 129 L178 88Z" fill="#8a9098"/><path d="M196 88 H204 V143 H196Z" fill="#9aa0a6"/><path d="M18 68 L110 74 L140 82 L128 110 L110 140 L95 171 H40 L20 135Z" fill="#9a9a90"/><path d="M20 88 L80 90 L70 110 L24 112Z" fill="#c4c4bc" opacity="0.9"/><circle cx="99.4" cy="76.1" r="1.2" fill="#3a3c3c" opacity="0.75"/><circle cx="119.6" cy="88.3" r="1.5" fill="#3a3c3c" opacity="0.75"/><circle cx="134.6" cy="101.6" r="2.4" fill="#3a3c3c" opacity="0.75"/><circle cx="85.3" cy="112.3" r="1.4" fill="#3a3c3c" opacity="0.75"/><circle cx="100.3" cy="126.7" r="1.9" fill="#3a3c3c" opacity="0.75"/><circle cx="110.4" cy="114.3" r="1.3" fill="#3a3c3c" opacity="0.75"/><circle cx="112.0" cy="109.2" r="1.6" fill="#3a3c3c" opacity="0.75"/><circle cx="42.9" cy="126.5" r="1.9" fill="#3a3c3c" opacity="0.75"/><circle cx="108.3" cy="127.4" r="2.2" fill="#3a3c3c" opacity="0.75"/><circle cx="127.5" cy="96.9" r="2.3" fill="#3a3c3c" opacity="0.75"/><circle cx="82.2" cy="130.9" r="2.4" fill="#3a3c3c" opacity="0.75"/><circle cx="49.3" cy="80.6" r="1.5" fill="#3a3c3c" opacity="0.75"/><circle cx="131.7" cy="99.5" r="2.1" fill="#3a3c3c" opacity="0.75"/><circle cx="95.6" cy="108.8" r="2.5" fill="#3a3c3c" opacity="0.75"/><circle cx="104.8" cy="130.5" r="2.4" fill="#3a3c3c" opacity="0.75"/><circle cx="134.1" cy="114.3" r="1.4" fill="#3a3c3c" opacity="0.75"/><circle cx="121.8" cy="132.8" r="2.5" fill="#3a3c3c" opacity="0.75"/><circle cx="94.1" cy="117.0" r="1.5" fill="#3a3c3c" opacity="0.75"/><circle cx="119.0" cy="108.1" r="1.6" fill="#3a3c3c" opacity="0.75"/><circle cx="46.0" cy="125.8" r="2.6" fill="#3a3c3c" opacity="0.75"/><circle cx="48.4" cy="122.4" r="1.8" fill="#3a3c3c" opacity="0.75"/><circle cx="113.0" cy="127.0" r="1.3" fill="#3a3c3c" opacity="0.75"/><circle cx="98.4" cy="74.8" r="2.2" fill="#3a3c3c" opacity="0.75"/><circle cx="71.4" cy="127.5" r="2.6" fill="#3a3c3c" opacity="0.75"/><circle cx="88.0" cy="134.9" r="1.6" fill="#3a3c3c" opacity="0.75"/><circle cx="43.0" cy="84.4" r="1.8" fill="#3a3c3c" opacity="0.75"/><circle cx="98.0" cy="81.8" r="1.3" fill="#3a3c3c" opacity="0.75"/><circle cx="122.4" cy="91.8" r="2.5" fill="#3a3c3c" opacity="0.75"/><circle cx="125.2" cy="95.8" r="1.8" fill="#3a3c3c" opacity="0.75"/><circle cx="89.4" cy="112.6" r="2.0" fill="#3a3c3c" opacity="0.75"/><circle cx="93.1" cy="111.1" r="2.5" fill="#3a3c3c" opacity="0.75"/><circle cx="88.2" cy="99.2" r="2.2" fill="#3a3c3c" opacity="0.75"/><circle cx="132.9" cy="104.8" r="2.0" fill="#3a3c3c" opacity="0.75"/><circle cx="62" cy="92" r="6" fill="#d8d040" opacity="0.9"/><circle cx="98" cy="90" r="6" fill="#a8c050" opacity="0.9"/><circle cx="88" cy="118" r="7" fill="#98b048" opacity="0.9"/><circle cx="120" cy="128" r="6" fill="#a0b850" opacity="0.9"/><circle cx="100" cy="160" r="9" fill="#8aa850" opacity="0.9"/><circle cx="32" cy="80" r="5" fill="#a0b050" opacity="0.9"/><circle cx="50" cy="76" r="5" fill="#b0b858" opacity="0.9"/><circle cx="80" cy="74" r="4" fill="#a8b858" opacity="0.9"/><path d="M20 124 L57 106 L64 116 L28 134Z" fill="#a42434"/><path d="M103 84 L124 79 L127 86 L105 91Z" fill="#c84048"/><circle cx="94" cy="132" r="3" fill="#c02030"/><circle cx="124" cy="144" r="3" fill="#c02030"/><path d="M18 133 L60 126 L90 140 L40 150Z" fill="#b8b6ae"/><path d="M40 150 L90 140 L95 171 H50Z" fill="#4a5058"/><path d="M25 140 L40 150 L50 171 H30Z" fill="#5a6068"/><path d="M0 66 Q18 74 24 100 Q30 130 18 152 L0 150Z" fill="#3c4a38"/><path d="M8 150 Q20 140 30 152 L40 171 H20Z" fill="#5a7a44"/><path d="M0 146 L28 171 H0Z" fill="#b8b0a0"/></g><rect x="-0.5" y="-0.5" width="258" height="172" fill="none" stroke="#0c0c0c" stroke-width="1"/></g></svg><div class="lab" style="left:76.5px;top:327.7px">01_fisheye_tutorial – JPG</div><div class="lab" style="left:378.70000000000005px;top:327.7px">02_fisheye – JPG</div><div class="lab" style="left:680.9px;top:327.7px">03_volume_deformation_tutorial – JPG</div><div class="lab" style="left:983.0999999999999px;top:327.7px">04_volume_deformation – JPG</div><div class="lab" style="left:1285.3px;top:327.7px">05_perspective_vertical_tutorial – JPG</div><div class="lab" style="left:76.5px;top:629.9px">06_perspective_vertical – JPG</div><div class="lab" style="left:378.70000000000005px;top:629.9px">07_perspective_rectangle_tutorial – JPG</div><div class="lab" style="left:680.9px;top:629.9px">08_perspective_rectangle – JPG</div><div class="lab" style="left:983.0999999999999px;top:629.9px">09_miniature_tutorial – JPG</div><div class="lab" style="left:1285.3px;top:629.9px">10_miniature – JPG</div></body></html>
